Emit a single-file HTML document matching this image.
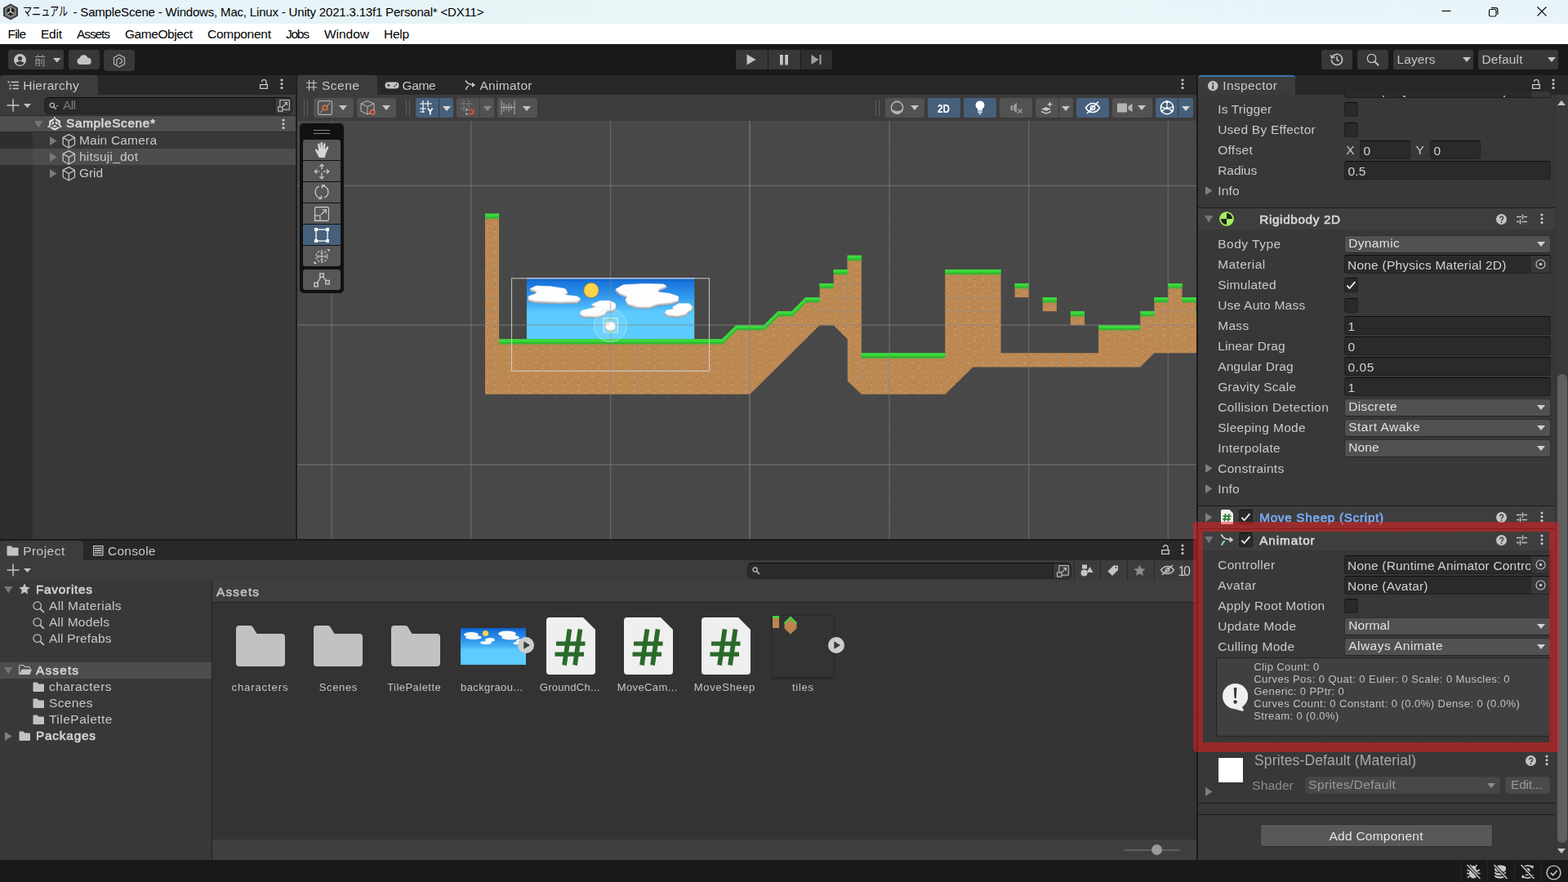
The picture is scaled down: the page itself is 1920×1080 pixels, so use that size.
<!DOCTYPE html>
<html lang="ja">
<head>
<meta charset="utf-8">
<title>Unity - SampleScene</title>
<style>
*{box-sizing:border-box;margin:0;padding:0}
html,body{width:1920px;height:1080px;overflow:hidden;background:#383838}
body{position:relative;font-family:"Liberation Sans","Noto Sans CJK JP",sans-serif;font-size:15.5px;line-height:1;color:#c8c8c8;-webkit-font-smoothing:antialiased}
#unity{position:absolute;left:0;top:54px;width:1920px;height:1026px;will-change:transform}
#unity>*{margin-top:-54px}
.a{position:absolute}
.t{position:absolute;white-space:nowrap;line-height:1;height:1em;letter-spacing:0}
.b{-webkit-text-stroke:.6px currentColor;color:#d4d4d4}
svg{position:absolute;overflow:visible}
.tab{position:absolute;background:#3c3c3c;border-radius:4px 4px 0 0}
.tb{position:absolute;background:#383838;border-radius:3px}
.sb{position:absolute;background:#525252;border-radius:3px;height:24px;top:120px}
.sbon{background:#46607c}
.fld{position:absolute;background:#2a2a2a;border:1px solid #212121;border-top-color:#0d0d0d;border-radius:3px;height:23px}
.dd{position:absolute;background:#515151;border:1px solid #303030;border-bottom-color:#242424;border-radius:3px;height:22px}
.cb{position:absolute;background:#2a2a2a;border:1px solid #212121;border-top-color:#0d0d0d;border-radius:3px;width:17px;height:18px}
.hl{position:absolute;background:#4d4d4d}
.ln{position:absolute;background:#1a1a1a;height:1px}
.hdr{position:absolute;background:#3e3e3e;border-top:1px solid #1a1a1a}
</style>
</head>
<body>
<!-- window title bar -->
<div class="a" style="left:0px;top:0px;width:1920px;height:29px;background:linear-gradient(90deg,#e5f2f9 0%,#e9f6f6 45%,#e8f4f9 100%);"></div>
<svg style="left:3px;top:4px" width="20" height="21" viewBox="0 0 20 21"><path d="M10 0.5 19 5.5v10L10 20.5 1 15.5v-10Z" fill="#3a3a3a"/><path d="M10 2.6 17 6.6v7.8L10 18.4 3 14.4V6.6Z" fill="#7d7d7d"/><path d="M10 5 14.5 7.6v5L10 15.2 5.5 12.6v-5Z" fill="#1e1e1e"/><path d="M10 10.2V5.6M10 10.2l4 2.3M10 10.2l-4 2.3" stroke="#e8e8e8" stroke-width="1.3" fill="none"/></svg>
<span class="t" style="left:28.0px;top:6px;font-size:15px;color:#000;transform:scaleX(.74);transform-origin:0 50%;">マニュアル</span>
<span class="t" style="left:89.5px;top:7px;font-size:15px;letter-spacing:-0.18px;color:#000;">- SampleScene - Windows, Mac, Linux - Unity 2021.3.13f1 Personal* &lt;DX11&gt;</span>
<svg style="left:1760px;top:4px" width="140" height="22" viewBox="0 0 140 22"><path d="M5.5 9.5h11" stroke="#111" stroke-width="1.2"/><rect x="63.5" y="7.5" width="8.5" height="8.5" rx="1.8" fill="none" stroke="#111" stroke-width="1.2"/><path d="M65.8 5.6h5.7a2.4 2.4 0 0 1 2.4 2.4v5.7" fill="none" stroke="#111" stroke-width="1.2"/><path d="M122.5 4.5l11 11M133.5 4.5l-11 11" stroke="#111" stroke-width="1.2"/></svg>
<!-- menu bar -->
<div class="a" style="left:0px;top:29px;width:1920px;height:25px;background:#fff;"></div>
<span class="t" style="left:9.5px;top:34px;letter-spacing:-0.82px;color:#000;">File</span>
<span class="t" style="left:50.0px;top:34px;letter-spacing:-0.24px;color:#000;">Edit</span>
<span class="t" style="left:94.0px;top:34px;letter-spacing:-1.10px;color:#000;">Assets</span>
<span class="t" style="left:153.0px;top:34px;letter-spacing:-0.44px;color:#000;">GameObject</span>
<span class="t" style="left:254.0px;top:34px;letter-spacing:-0.27px;color:#000;">Component</span>
<span class="t" style="left:350.0px;top:34px;letter-spacing:-1.25px;color:#000;">Jobs</span>
<span class="t" style="left:397.0px;top:34px;letter-spacing:-0.03px;color:#000;">Window</span>
<span class="t" style="left:470.0px;top:34px;letter-spacing:-0.29px;color:#000;">Help</span>
<div id="unity">
<!-- main toolbar -->
<div class="a" style="left:0px;top:54px;width:1920px;height:38px;background:#191919;"></div>
<div class="tb" style="left:10px;top:61px;width:68px;height:24px;"></div>
<svg style="left:17px;top:66px" width="15" height="15" viewBox="0 0 15 15"><circle cx="7.5" cy="7.5" r="7.5" fill="#c4c4c4"/><circle cx="7.5" cy="5.6" r="2.6" fill="#383838"/><path d="M2.6 11.6c1.2-2 2.9-2.6 4.9-2.6s3.7.6 4.9 2.6c-1.3 1.5-3 2.2-4.9 2.2s-3.6-.7-4.9-2.2Z" fill="#383838"/></svg>
<span class="t" style="left:42.0px;top:67px;font-size:14px;color:#9a9a9a;">前</span>
<svg style="left:64.75px;top:70.75px" width="9.5" height="5.5" viewBox="0 0 9.5 5.5"><path d="M0 0H9.5L4.75 5.5Z" fill="#c4c4c4"/></svg>
<div class="tb" style="left:84px;top:61px;width:38px;height:24px;"></div>
<svg style="left:94px;top:67px" width="18" height="12.5" viewBox="0 0 18 12.5"><path d="M4.2 12a4 4 0 0 1-.5-7.9A5 5 0 0 1 13.300 3.800 A4.1 4.1 0 0 1 13.800 12Z" fill="#c4c4c4"/></svg>
<div class="tb" style="left:127px;top:61px;width:38px;height:25.5px;border-radius:4px;"></div>
<svg style="left:138px;top:66px" width="16" height="18" viewBox="0 0 16 18"><path d="M8 1 14.5 4.7v7.6L8 16 1.500 12.300V4.7Z" fill="none" stroke="#b0b0b0" stroke-width="1.3"/><path d="M5 13.500V6.8L8 5l3 1.800v3.500L8 12" fill="none" stroke="#b0b0b0" stroke-width="1.3"/></svg>
<div class="a" style="left:901px;top:61px;width:118px;height:24px;background:#383838;border-radius:3px"></div>
<div class="a" style="left:980px;top:61px;width:39px;height:24px;background:#2e2e2e;border-radius:0 3px 3px 0"></div>
<div class="a" style="left:940px;top:61px;width:1px;height:24px;background:#191919;"></div>
<div class="a" style="left:980px;top:61px;width:1px;height:24px;background:#191919;"></div>
<svg style="left:914px;top:66px" width="12" height="14" viewBox="0 0 12 14"><path d="M.5.500 11.500 7 .5 13.500Z" fill="#c4c4c4"/></svg>
<svg style="left:954px;top:66px" width="12" height="14" viewBox="0 0 12 14"><rect x="1" y="1" width="3.800" height="12.500" fill="#c4c4c4"/><rect x="7.200" y="1" width="3.800" height="12.500" fill="#c4c4c4"/></svg>
<svg style="left:993px;top:66px" width="14" height="14" viewBox="0 0 14 14"><path d="M.5 1 9.500 7 .5 13Z" fill="#a0a0a0"/><rect x="10.500" y="1" width="2" height="12" fill="#a0a0a0"/></svg>
<div class="tb" style="left:1618px;top:61px;width:38px;height:24px;"></div>
<svg style="left:1629px;top:65px" width="16" height="16" viewBox="0 0 16 16"><path d="M2.200 4.800A6.600 6.600 0 1 1 1.400 8" fill="none" stroke="#c4c4c4" stroke-width="1.500"/><path d="M.4 2.200l1.300 3.900 3.800-1.400" fill="none" stroke="#c4c4c4" stroke-width="1.500"/><path d="M8 4.300V8.400l2.600 1.500" fill="none" stroke="#c4c4c4" stroke-width="1.500"/></svg>
<div class="tb" style="left:1662px;top:61px;width:38px;height:24px;"></div>
<svg style="left:1673px;top:65px" width="16" height="16" viewBox="0 0 16 16"><circle cx="6.500" cy="6.500" r="5.200" fill="none" stroke="#c4c4c4" stroke-width="1.300"/><path d="M10.500 10.500 14.500 14.500" stroke="#c4c4c4" stroke-width="2" stroke-linecap="round"/></svg>
<div class="tb" style="left:1706px;top:61px;width:98px;height:24px;"></div>
<span class="t" style="left:1710.5px;top:65px;letter-spacing:0.10px;color:#c4c4c4;">Layers</span>
<svg style="left:1790.5px;top:70.0px" width="10" height="6" viewBox="0 0 10 6"><path d="M0 0H10L5.0 6Z" fill="#c4c4c4"/></svg>
<div class="tb" style="left:1810px;top:61px;width:98px;height:24px;"></div>
<span class="t" style="left:1814.5px;top:65px;letter-spacing:0.15px;color:#c4c4c4;">Default</span>
<svg style="left:1894.5px;top:70.0px" width="10" height="6" viewBox="0 0 10 6"><path d="M0 0H10L5.0 6Z" fill="#c4c4c4"/></svg>
<!-- hierarchy panel -->
<div class="a" style="left:0px;top:92px;width:362px;height:569px;background:#383838;"></div>
<div class="a" style="left:0px;top:92px;width:362px;height:24px;background:#282828;"></div>
<div class="tab" style="left:0px;top:92px;width:120px;height:24px;"></div>
<svg style="left:9px;top:98px" width="15" height="13" viewBox="0 0 15 13"><path d="M4.500 2.500h9.500M6.500 6.500h7.500M6.500 10.500h7.500" stroke="#c4c4c4" stroke-width="1.300"/><rect x="0.500" y="1.500" width="2" height="2" fill="#c4c4c4"/><rect x="2.500" y="5.500" width="2" height="2" fill="#c4c4c4"/><rect x="2.500" y="9.500" width="2" height="2" fill="#c4c4c4"/></svg>
<span class="t" style="left:28.2px;top:97px;letter-spacing:0.27px;">Hierarchy</span>
<svg style="left:318px;top:97px" width="10" height="12" viewBox="0 0 10 12"><path d="M2.600 3.400a2.700 2.700 0 0 1 5.400-.3V6.500" fill="none" stroke="#c8c8c8" stroke-width="1.300"/><rect x="0.650" y="6.650" width="8.700" height="4.700" fill="none" stroke="#c8c8c8" stroke-width="1.300"/></svg>
<svg style="left:343px;top:96.2px" width="4" height="13.6" viewBox="0 0 4 13.6"><circle cx="2" cy="2" r="1.55" fill="#c8c8c8"/><circle cx="2" cy="6.8" r="1.55" fill="#c8c8c8"/><circle cx="2" cy="11.6" r="1.55" fill="#c8c8c8"/></svg>
<div class="a" style="left:0px;top:116px;width:362px;height:26px;background:#3c3c3c;"></div>
<svg style="left:8px;top:121px" width="16" height="16" viewBox="0 0 16 16"><path d="M8 0.500v15M0.500 8h15" stroke="#c4c4c4" stroke-width="1.500"/></svg>
<svg style="left:29.0px;top:126.5px" width="9" height="5" viewBox="0 0 9 5"><path d="M0 0H9L4.5 5Z" fill="#c4c4c4"/></svg>
<div class="fld" style="left:54px;top:119px;width:304px;height:21px;border-radius:6px;"></div>
<div class="a" style="left:336px;top:120px;width:1px;height:19px;background:#1f1f1f;"></div>
<svg style="left:60px;top:125px" width="12" height="10" viewBox="0 0 12 10"><circle cx="3.800" cy="3.800" r="2.700" fill="none" stroke="#b4b4b4" stroke-width="1.400"/><path d="M5.800 5.800 8.800 8.800" stroke="#b4b4b4" stroke-width="1.600"/><path d="M8.500 4h3l-1.500 1.800Z" fill="#b4b4b4"/></svg>
<span class="t" style="left:77.0px;top:121px;letter-spacing:-0.61px;color:#7a7a7a;">All</span>
<div class="a" style="left:337px;top:120px;width:20px;height:19px;background:#3a3a3a;border-radius:0 6px 6px 0"></div>
<svg style="left:339.5px;top:121.5px" width="15" height="15" viewBox="0 0 15 15"><rect x="2.800" y="0.700" width="11.500" height="11.500" fill="none" stroke="#c0c0c0" stroke-width="1.100"/><rect x="0.600" y="9" width="5.200" height="5.200" fill="#3a3a3a" stroke="#c0c0c0" stroke-width="1.100"/><path d="M6 9 11 3.800M7.800 3.500h3.500v3.500" fill="none" stroke="#c0c0c0" stroke-width="1.200"/></svg>
<div class="a" style="left:0px;top:141px;width:362px;height:1px;background:#262626;"></div>
<div class="a" style="left:0px;top:162px;width:40px;height:498px;background:#2e2e2e;"></div>
<div class="a" style="left:0px;top:142px;width:362px;height:20px;background:#4f4f4f;"></div>
<div class="a" style="left:0px;top:161px;width:362px;height:1px;background:#2c2c2c;"></div>
<svg style="left:42.25px;top:147.75px" width="10.5" height="8.5" viewBox="0 0 10.5 8.5"><path d="M0 0H10.5L5.25 8.5Z" fill="#757575"/></svg>
<svg style="left:58px;top:143px" width="18" height="18" viewBox="0 0 18 18"><path d="M9 1.200 15.800 5v8L9 16.800 2.200 13V5Z" fill="#e0e0e0"/><path d="M9 9V2M9 9l6 3.500M9 9 3 12.500" stroke="#4a4a4a" stroke-width="1.600"/><path d="M9 4.500 13 6.800v4.500L9 13.500 5 11.300V6.800Z" fill="none" stroke="#4a4a4a" stroke-width="1.200"/><path d="M0.500 12.500 3 11M17.500 12.500 15 11M9 0v2.500" stroke="#e0e0e0" stroke-width="1.500"/></svg>
<span class="t b" style="left:81.0px;top:143px;font-size:15.3px;letter-spacing:0.71px;color:#d8d8d8;">SampleScene*</span>
<svg style="left:345px;top:145.2px" width="4" height="13.6" viewBox="0 0 4 13.6"><circle cx="2" cy="2" r="1.55" fill="#c8c8c8"/><circle cx="2" cy="6.8" r="1.55" fill="#c8c8c8"/><circle cx="2" cy="11.6" r="1.55" fill="#c8c8c8"/></svg>
<div class="a" style="left:0px;top:182px;width:362px;height:20px;background:#4d4d4d;"></div>
<div class="a" style="left:0px;top:182px;width:40px;height:20px;background:#464646;"></div>
<svg style="left:61.25px;top:166.5px" width="8.5" height="11" viewBox="0 0 8.5 11"><path d="M0 0V11L8.5 5.5Z" fill="#7a7a7a"/></svg>
<svg style="left:75.8px;top:163.5px" width="16.6" height="17.6" viewBox="0.800 0.500 14.400 16"><path d="M8 1 14.500 4.500v7.800L8 16 1.500 12.300V4.500Z" fill="none" stroke="#c4c4c4" stroke-width="1.200" stroke-linejoin="round"/><path d="M1.500 4.500 8 8.200l6.500-3.700M8 8.200V16" fill="none" stroke="#c4c4c4" stroke-width="1.200"/></svg>
<span class="t" style="left:97.0px;top:164px;letter-spacing:0.20px;">Main Camera</span>
<svg style="left:61.25px;top:186.5px" width="8.5" height="11" viewBox="0 0 8.5 11"><path d="M0 0V11L8.5 5.5Z" fill="#7a7a7a"/></svg>
<svg style="left:75.8px;top:183.5px" width="16.6" height="17.6" viewBox="0.800 0.500 14.400 16"><path d="M8 1 14.500 4.500v7.800L8 16 1.500 12.300V4.500Z" fill="none" stroke="#c4c4c4" stroke-width="1.200" stroke-linejoin="round"/><path d="M1.500 4.500 8 8.200l6.500-3.700M8 8.200V16" fill="none" stroke="#c4c4c4" stroke-width="1.200"/></svg>
<span class="t" style="left:97.0px;top:184px;letter-spacing:0.22px;">hitsuji_dot</span>
<svg style="left:61.25px;top:206.5px" width="8.5" height="11" viewBox="0 0 8.5 11"><path d="M0 0V11L8.5 5.5Z" fill="#7a7a7a"/></svg>
<svg style="left:75.8px;top:203.5px" width="16.6" height="17.6" viewBox="0.800 0.500 14.400 16"><path d="M8 1 14.500 4.500v7.800L8 16 1.500 12.300V4.500Z" fill="none" stroke="#c4c4c4" stroke-width="1.200" stroke-linejoin="round"/><path d="M1.500 4.500 8 8.200l6.500-3.700M8 8.200V16" fill="none" stroke="#c4c4c4" stroke-width="1.200"/></svg>
<span class="t" style="left:97.0px;top:204px;letter-spacing:-0.09px;">Grid</span>
<div class="a" style="left:362px;top:92px;width:2px;height:568px;background:#1e1e1e;"></div>
<div class="a" style="left:0px;top:660px;width:1467px;height:2px;background:#1a1a1a;"></div>
<!-- scene panel -->
<div class="a" style="left:364px;top:92px;width:1101px;height:24px;background:#282828;"></div>
<div class="tab" style="left:364px;top:92px;width:98px;height:24px;"></div>
<svg style="left:375px;top:98px" width="13" height="13" viewBox="0 0 13 13"><path d="M3.500 0v13M9 0v13M0 3.500h13M0 9h13" stroke="#c4c4c4" stroke-width="1.200"/></svg>
<span class="t" style="left:394.0px;top:97px;letter-spacing:0.51px;">Scene</span>
<svg style="left:471px;top:99px" width="18" height="11" viewBox="0 0 18 11"><path d="M4.500 1.500h9a4 4 0 0 1 0 8h-9a4 4 0 0 1 0-8Z" fill="#c4c4c4"/><path d="M3 5.500h3.600M4.800 3.700v3.600" stroke="#282828" stroke-width="1.100"/><circle cx="12" cy="6.600" r="0.900" fill="#282828"/><circle cx="14.200" cy="4.500" r="0.900" fill="#282828"/></svg>
<span class="t" style="left:492.5px;top:97px;letter-spacing:-0.40px;">Game</span>
<svg style="left:569px;top:97px" width="14" height="14" viewBox="0 0 14 14"><path d="M1.200 1.500C2.500 5 5 6.800 11.500 6.900" fill="none" stroke="#c8c8c8" stroke-width="1.600"/><path d="M9 3.800 13 6.900 9 10Z" fill="#c8c8c8"/><path d="M4.600 8C3.200 9.200 2 10.800 1.500 12.800" fill="none" stroke="#c8c8c8" stroke-width="1.600"/></svg>
<span class="t" style="left:587.5px;top:97px;letter-spacing:0.28px;">Animator</span>
<svg style="left:1446px;top:96.2px" width="4" height="13.6" viewBox="0 0 4 13.6"><circle cx="2" cy="2" r="1.55" fill="#c8c8c8"/><circle cx="2" cy="6.8" r="1.55" fill="#c8c8c8"/><circle cx="2" cy="11.6" r="1.55" fill="#c8c8c8"/></svg>
<div class="a" style="left:364px;top:116px;width:1101px;height:32px;background:#3c3c3c;"></div>
<div class="a" style="left:372px;top:122px;width:1px;height:20px;background:#5e5e5e;"></div><div class="a" style="left:376px;top:122px;width:1px;height:20px;background:#5e5e5e;"></div>
<div class="a" style="left:497px;top:122px;width:1px;height:20px;background:#5e5e5e;"></div><div class="a" style="left:501px;top:122px;width:1px;height:20px;background:#5e5e5e;"></div>
<div class="a" style="left:1071.5px;top:122px;width:1px;height:20px;background:#5e5e5e;"></div><div class="a" style="left:1075.5px;top:122px;width:1px;height:20px;background:#5e5e5e;"></div>
<div class="sb" style="left:384px;top:120px;width:49px;height:24px;"></div>
<svg style="left:389px;top:123px" width="18" height="18" viewBox="0 0 18 18"><rect x="0.600" y="0.600" width="16.800" height="16.800" rx="2" fill="none" stroke="#b0b0b0" stroke-width="1.100"/><path d="M3 15 15 3" stroke="#b0b0b0" stroke-width="1"/><circle cx="9" cy="9" r="2.800" fill="#525252" stroke="#f2683c" stroke-width="1.500"/></svg>
<svg style="left:415.0px;top:129.0px" width="10" height="6" viewBox="0 0 10 6"><path d="M0 0H10L5.0 6Z" fill="#c4c4c4"/></svg>
<div class="sb" style="left:437px;top:120px;width:48px;height:24px;"></div>
<svg style="left:441px;top:122px" width="20" height="20" viewBox="0 0 20 20"><path d="M9 1.500 17 5v9l-8 4-8-4V5Z" fill="none" stroke="#b0b0b0" stroke-width="1.100" stroke-linejoin="round"/><path d="M1 5l8 3.500L17 5M9 8.500V18" fill="none" stroke="#b0b0b0" stroke-width="1.100"/><circle cx="15.200" cy="15.300" r="2.800" fill="#525252" stroke="#f2683c" stroke-width="1.500"/></svg>
<svg style="left:468.0px;top:129.0px" width="10" height="6" viewBox="0 0 10 6"><path d="M0 0H10L5.0 6Z" fill="#c4c4c4"/></svg>
<div class="sb sbon" style="left:509px;top:120px;width:46px;height:24px;"></div><div class="a" style="left:537px;top:120px;width:1px;height:24px;background:#3c3c3c;"></div>
<svg style="left:514px;top:123px" width="18" height="18" viewBox="0 0 18 18"><path d="M4 0v15M10 0v8M0 4h15M0 10h8M0 14h6" stroke="#fff" stroke-width="1.200"/><path d="M10 9.500 12.800 13.500 15.600 9.500M12.800 13.500V17.500" fill="none" stroke="#fff" stroke-width="1.700"/></svg>
<svg style="left:541.5px;top:129.5px" width="10" height="6" viewBox="0 0 10 6"><path d="M0 0H10L5.0 6Z" fill="#d8d8d8"/></svg>
<div class="sb" style="left:559px;top:120px;width:46px;height:24px;"></div><div class="a" style="left:587px;top:120px;width:1px;height:24px;background:#3c3c3c;"></div>
<svg style="left:564px;top:123px" width="19" height="18" viewBox="0 0 19 18"><path d="M4 0v14M10 0v9M0 4h15M0 10h9" stroke="#8c8c8c" stroke-width="1.100" stroke-dasharray="2 1"/><path d="M9.500 11.500h3.500a2.600 2.600 0 0 1 0 5.200h-3.500" fill="none" stroke="#d2562f" stroke-width="1.900"/><rect x="6.500" y="10.500" width="2" height="2" fill="#c4c4c4"/><rect x="6.500" y="15.500" width="2" height="2" fill="#c4c4c4"/></svg>
<svg style="left:591.5px;top:129.5px" width="10" height="6" viewBox="0 0 10 6"><path d="M0 0H10L5.0 6Z" fill="#8a8a8a"/></svg>
<div class="sb" style="left:609px;top:120px;width:49px;height:24px;"></div>
<svg style="left:613px;top:123px" width="18" height="17" viewBox="0 0 18 17"><path d="M1 0v17M17 0v17" stroke="#b0b0b0" stroke-width="1"/><path d="M4 3v11M7 5v7M10 3v11M13 5v7M1 8.500h16" stroke="#b0b0b0" stroke-width="1"/></svg>
<svg style="left:640.0px;top:129.5px" width="10" height="6" viewBox="0 0 10 6"><path d="M0 0H10L5.0 6Z" fill="#c4c4c4"/></svg>
<div class="sb" style="left:1084px;top:120px;width:48px;height:24px;"></div>
<svg style="left:1090px;top:123px" width="17" height="17" viewBox="0 0 17 17"><circle cx="8.500" cy="8.800" r="7.200" fill="none" stroke="#b8b8b8" stroke-width="1.400"/><path d="M1.730 11.260A7.200 7.200 0 0 0 15.270 11.260A12 12 0 0 1 1.730 11.260Z" fill="#b8b8b8" stroke="#b8b8b8" stroke-width="1"/><path d="M5.500 1.200h6" stroke="#b8b8b8" stroke-width="1.300"/></svg>
<svg style="left:1114.5px;top:129.0px" width="10" height="6" viewBox="0 0 10 6"><path d="M0 0H10L5.0 6Z" fill="#c4c4c4"/></svg>
<div class="sb sbon" style="left:1136px;top:120px;width:40px;height:24px;"></div>
<span class="t" style="left:1147.5px;top:126px;font-size:13px;font-weight:bold;color:#fff;transform:scale(.9,1.16);transform-origin:0 50%">2D</span>
<div class="sb sbon" style="left:1180px;top:120px;width:40px;height:24px;"></div>
<svg style="left:1194px;top:123px" width="12" height="18" viewBox="0 0 12 18"><path d="M6 0.500a5.300 5.300 0 0 1 3 9.700V12.500H3V10.200A5.300 5.300 0 0 1 6 0.500Z" fill="#fff"/><rect x="3.300" y="13.500" width="5.400" height="1.600" fill="#fff"/><path d="M4 16h4l-2 1.500Z" fill="#fff"/></svg>
<div class="sb" style="left:1224px;top:120px;width:40px;height:24px;"></div>
<svg style="left:1237px;top:124px" width="18" height="16" viewBox="0 0 18 16"><path d="M0.500 5h2.500V11h-2.500Z M4 5 8 1.500v13L4 11Z" fill="#9a9a9a"/><path d="M9.500 9.500 14.500 14.500M14.500 9.500 9.500 14.500" stroke="#9a9a9a" stroke-width="1.600"/></svg>
<div class="sb" style="left:1268px;top:120px;width:46px;height:24px;"></div><div class="a" style="left:1296px;top:120px;width:1px;height:24px;background:#3c3c3c;"></div>
<svg style="left:1274px;top:124px" width="17" height="16" viewBox="0 0 17 16"><path d="M1 9.500 7 7l6 2.500L7 12Z" fill="#c4c4c4"/><path d="M1 12.500 7 15l6-2.500" fill="none" stroke="#c4c4c4" stroke-width="1.400"/><path d="M11.500 0l1 2.800 2.800 1-2.800 1-1 2.800-1-2.800-2.800-1 2.800-1Z" fill="#c4c4c4"/></svg>
<svg style="left:1300.0px;top:129.5px" width="10" height="6" viewBox="0 0 10 6"><path d="M0 0H10L5.0 6Z" fill="#c4c4c4"/></svg>
<div class="sb sbon" style="left:1318px;top:120px;width:40px;height:24px;"></div>
<svg style="left:1328px;top:123px" width="20" height="18" viewBox="0 0 20 18"><path d="M1.500 9C4 5 7 3.500 10 3.500S16 5 18.500 9C16 13 13 14.500 10 14.500S4 13 1.500 9Z" fill="none" stroke="#fff" stroke-width="1.500"/><circle cx="10" cy="9" r="2.600" fill="none" stroke="#fff" stroke-width="1.500"/><path d="M3 16 17 1.500" stroke="#fff" stroke-width="1.600"/></svg>
<div class="sb" style="left:1362px;top:120px;width:49px;height:24px;"></div>
<svg style="left:1368px;top:126px" width="20" height="12" viewBox="0 0 20 12"><rect x="0" y="0.500" width="12" height="11" rx="1" fill="#b4b4b4"/><path d="M13.500 4 18.500 1v10L13.500 8Z" fill="#b4b4b4"/></svg>
<svg style="left:1393.0px;top:129.0px" width="10" height="6" viewBox="0 0 10 6"><path d="M0 0H10L5.0 6Z" fill="#c4c4c4"/></svg>
<div class="sb sbon" style="left:1415px;top:120px;width:46px;height:24px;"></div><div class="a" style="left:1442px;top:120px;width:1px;height:24px;background:#3c3c3c;"></div>
<svg style="left:1420px;top:123px" width="18" height="18" viewBox="0 0 18 18"><circle cx="9" cy="9" r="7.800" fill="none" stroke="#fff" stroke-width="1.400"/><path d="M9 1.200V9L2.500 13M9 9l6.500 4" fill="none" stroke="#fff" stroke-width="1.200"/><path d="M1.500 7.500c4 3 11 3 15 0" fill="none" stroke="#fff" stroke-width="1.200"/><circle cx="9" cy="1.800" r="1.700" fill="#fff"/><circle cx="9" cy="9.300" r="1.600" fill="#fff"/><circle cx="2.800" cy="12.800" r="1.600" fill="#fff"/><circle cx="15.200" cy="12.800" r="1.600" fill="#fff"/></svg>
<svg style="left:1447.0px;top:129.5px" width="10" height="6" viewBox="0 0 10 6"><path d="M0 0H10L5.0 6Z" fill="#d8d8d8"/></svg>
<svg style="left:364px;top:148px;overflow:hidden" width="1101" height="512" viewBox="364 148 1101 512"><defs><pattern id="mg" x="747.6" y="398.2" width="17.07" height="17.07" patternUnits="userSpaceOnUse"><path d="M0.500 0V17.07M0 0.500H17.07" stroke="#4b4b4b" stroke-width="1" fill="none"/></pattern><pattern id="dirt" x="747.6" y="398.2" width="17.07" height="17.07" patternUnits="userSpaceOnUse"><rect width="17.17" height="17.17" fill="#bd8953"/><rect x="11" y="2.600" width="2.200" height="0.900" fill="#8a5a2c"/><rect x="11" y="3.600" width="2.200" height="0.900" fill="#e6b884"/><rect x="2" y="12.700" width="2.200" height="0.900" fill="#8a5a2c"/><rect x="2" y="13.700" width="2.200" height="0.900" fill="#e6b884"/><rect x="7" y="9.600" width="1" height="1" fill="#8a5a2c"/><rect x="7" y="10.600" width="1" height="1" fill="#e0b07c"/><path d="M2.300 1.300 4.300 3.300" stroke="#dcae7e" stroke-width="0.900"/><rect x="4" y="2" width="1" height="1" fill="#94622f"/><path d="M11.300 11.600 13.300 13.300" stroke="#dcae7e" stroke-width="0.900"/></pattern><linearGradient id="sky" x1="0" y1="0" x2="0" y2="1"><stop offset="0" stop-color="#0d5cc4"/><stop offset="0.060" stop-color="#1874dc"/><stop offset="0.250" stop-color="#2b90ea"/><stop offset="0.450" stop-color="#47b2f6"/><stop offset="0.560" stop-color="#5ccbfd"/><stop offset="1" stop-color="#5ccbfd"/></linearGradient></defs><rect x="364" y="148" width="1101" height="512" fill="#484848"/><rect x="364" y="148" width="1101" height="512" fill="url(#mg)"/><rect x="645" y="340.600" width="205.200" height="74.700" fill="url(#sky)"/><rect x="645" y="340.200" width="205.200" height="1.200" fill="#8fb4e8"/><polygon points="649.5,355.7 656.6,352.3 674.2,352.9 691.8,355.7 694.5,359.7 690.4,363.1 706.7,365.1 710.5,367.8 706.7,371.0 685.0,371.5 655.2,370.5 647.8,368.5 647.1,365.1 657.9,361.1 655.9,357.7" fill="#8f98a8" stroke="#8f98a8" stroke-width="1.600" stroke-linejoin="round"/><polygon points="649.5,354.9 656.6,351.5 674.2,352.1 691.8,354.9 694.5,358.9 690.4,362.3 706.7,364.3 710.5,367.0 706.7,370.2 685.0,370.7 655.2,369.7 647.8,367.7 647.1,364.3 657.9,360.3 655.9,356.9" fill="#c4c4c4" stroke="#c4c4c4" stroke-width="1.400" stroke-linejoin="round"/><polygon points="649.5,353.5 656.6,350.1 674.2,350.7 691.8,353.5 694.5,357.5 690.4,360.9 706.7,362.9 710.5,365.6 706.7,368.8 685.0,369.3 655.2,368.3 647.8,366.3 647.1,362.9 657.9,358.9 655.9,355.5" fill="#fdfdfd" stroke="#fdfdfd" stroke-width="0.600" stroke-linejoin="round"/><polygon points="754.1,356.3 763.5,350.9 789.3,349.6 812.3,350.2 815.7,352.3 806.9,355.7 804.8,359.7 820.4,361.7 830.6,365.1 829.9,369.9 820.4,372.6 805.5,373.9 794.7,377.7 779.8,377.3 769.0,373.9 766.2,368.5 769.0,365.1 759.5,361.1" fill="#8f98a8" stroke="#8f98a8" stroke-width="1.600" stroke-linejoin="round"/><polygon points="754.1,355.5 763.5,350.1 789.3,348.8 812.3,349.4 815.7,351.5 806.9,354.9 804.8,358.9 820.4,360.9 830.6,364.3 829.9,369.1 820.4,371.8 805.5,373.1 794.7,376.9 779.8,376.5 769.0,373.1 766.2,367.7 769.0,364.3 759.5,360.3" fill="#c4c4c4" stroke="#c4c4c4" stroke-width="1.400" stroke-linejoin="round"/><polygon points="754.1,354.1 763.5,348.7 789.3,347.4 812.3,348.0 815.7,350.1 806.9,353.5 804.8,357.5 820.4,359.5 830.6,362.9 829.9,367.7 820.4,370.4 805.5,371.7 794.7,375.5 779.8,375.1 769.0,371.7 766.2,366.3 769.0,362.9 759.5,358.9" fill="#fdfdfd" stroke="#fdfdfd" stroke-width="0.600" stroke-linejoin="round"/><polygon points="724.9,374.6 735.1,370.5 747.3,370.5 753.4,373.9 753.4,378.7 750.0,381.4 742.5,382.1 740.5,386.1 731.0,389.1 714.8,388.8 710.5,386.1 712.1,382.7 722.9,380.0 731.0,378.0" fill="#8f98a8" stroke="#8f98a8" stroke-width="1.600" stroke-linejoin="round"/><polygon points="724.9,373.8 735.1,369.7 747.3,369.7 753.4,373.1 753.4,377.9 750.0,380.6 742.5,381.3 740.5,385.3 731.0,388.3 714.8,388.0 710.5,385.3 712.1,381.9 722.9,379.2 731.0,377.2" fill="#c4c4c4" stroke="#c4c4c4" stroke-width="1.400" stroke-linejoin="round"/><polygon points="724.9,372.4 735.1,368.3 747.3,368.3 753.4,371.7 753.4,376.5 750.0,379.2 742.5,379.9 740.5,383.9 731.0,386.9 714.8,386.6 710.5,383.9 712.1,380.5 722.9,377.8 731.0,375.8" fill="#fdfdfd" stroke="#fdfdfd" stroke-width="0.600" stroke-linejoin="round"/><polygon points="823.8,378.0 831.2,373.9 843.4,373.9 847.5,377.3 846.1,381.4 842.1,382.7 840.0,386.1 829.9,388.6 817.7,387.5 814.3,384.8 816.3,382.1 825.8,380.7" fill="#8f98a8" stroke="#8f98a8" stroke-width="1.600" stroke-linejoin="round"/><polygon points="823.8,377.2 831.2,373.1 843.4,373.1 847.5,376.5 846.1,380.6 842.1,381.9 840.0,385.3 829.9,387.8 817.7,386.7 814.3,384.0 816.3,381.3 825.8,379.9" fill="#c4c4c4" stroke="#c4c4c4" stroke-width="1.400" stroke-linejoin="round"/><polygon points="823.8,375.8 831.2,371.7 843.4,371.7 847.5,375.1 846.1,379.2 842.1,380.5 840.0,383.9 829.9,386.4 817.7,385.3 814.3,382.6 816.3,379.9 825.8,378.5" fill="#fdfdfd" stroke="#fdfdfd" stroke-width="0.600" stroke-linejoin="round"/><circle cx="724" cy="355.500" r="9.200" fill="#fdd349" stroke="#9c7a3a" stroke-width="0.800"/><polygon points="593.97,261.64 611.04,261.64 611.04,415.27 884.16,415.27 901.23,398.20 935.37,398.20 952.44,381.13 969.51,381.13 986.58,364.06 1003.65,364.06 1003.65,346.99 1020.72,346.99 1020.72,329.92 1037.79,329.92 1037.79,312.85 1054.86,312.85 1054.86,432.34 1157.28,432.34 1157.28,329.92 1225.56,329.92 1225.56,432.34 1345.05,432.34 1345.05,398.20 1396.26,398.20 1396.26,381.13 1413.33,381.13 1413.33,364.06 1430.40,364.06 1430.40,346.99 1447.47,346.99 1447.47,364.06 1464.54,364.06 1464.54,381.13 1481.61,381.13 1481.61,432.34 1413.33,432.34 1396.26,449.41 1191.42,449.41 1157.28,482.70 1054.86,482.70 1037.79,466.48 1037.79,415.27 1020.72,398.20 1003.65,398.20 918.30,482.70 593.97,482.70" fill="url(#dirt)"/><rect x="1242.63" y="346.99" width="17.07" height="17.07" fill="url(#dirt)"/><rect x="1276.77" y="364.06" width="17.07" height="17.07" fill="url(#dirt)"/><rect x="1310.91" y="381.13" width="17.07" height="17.07" fill="url(#dirt)"/><path d="M781.7 415.3V482.7M798.8 415.3V482.7M815.9 415.3V482.7M833.0 415.3V482.7M594.0 329.9h17.07M594.0 347.0h17.07M594.0 364.1h17.07M594.0 381.1h17.07M1037.8 312.9V398.2M1020.7 347.0h34.14M1020.7 364.1h34.14M1003.7 381.1h51.21M1054.9 439.2V466.5M1071.9 439.2V482.7M1089.0 439.2V482.7M1259.7 432.3V449.4M1276.8 432.3V449.4M1293.8 432.3V449.4M1310.9 432.3V449.4M1328.0 432.3V449.4M1157.3 364.1h68.28M1157.3 381.1h68.28M1396.3 381.1h68.28" stroke="#909090" stroke-opacity="0.550" stroke-width="1" fill="none"/><path d="M593.97 261.64H611.04V266.76L608.91 268.96L606.77 266.76L604.64 268.96L602.51 266.76L600.37 268.96L598.24 266.76L596.10 268.96L593.97 266.76Z" fill="#2cba2f"/><rect x="593.97" y="261.64" width="17.07" height="3.58" fill="#3bd93c"/><path d="M611.04 415.27H884.16V420.39L882.03 422.59L879.89 420.39L877.76 422.59L875.62 420.39L873.49 422.59L871.36 420.39L869.22 422.59L867.09 420.39L864.96 422.59L862.82 420.39L860.69 422.59L858.56 420.39L856.42 422.59L854.29 420.39L852.15 422.59L850.02 420.39L847.89 422.59L845.75 420.39L843.62 422.59L841.49 420.39L839.35 422.59L837.22 420.39L835.08 422.59L832.95 420.39L830.82 422.59L828.68 420.39L826.55 422.59L824.42 420.39L822.28 422.59L820.15 420.39L818.01 422.59L815.88 420.39L813.75 422.59L811.61 420.39L809.48 422.59L807.35 420.39L805.21 422.59L803.08 420.39L800.94 422.59L798.81 420.39L796.68 422.59L794.54 420.39L792.41 422.59L790.27 420.39L788.14 422.59L786.01 420.39L783.87 422.59L781.74 420.39L779.61 422.59L777.47 420.39L775.34 422.59L773.21 420.39L771.07 422.59L768.94 420.39L766.80 422.59L764.67 420.39L762.54 422.59L760.40 420.39L758.27 422.59L756.13 420.39L754.00 422.59L751.87 420.39L749.73 422.59L747.60 420.39L745.47 422.59L743.33 420.39L741.20 422.59L739.06 420.39L736.93 422.59L734.80 420.39L732.66 422.59L730.53 420.39L728.40 422.59L726.26 420.39L724.13 422.59L722.00 420.39L719.86 422.59L717.73 420.39L715.59 422.59L713.46 420.39L711.33 422.59L709.19 420.39L707.06 422.59L704.92 420.39L702.79 422.59L700.66 420.39L698.52 422.59L696.39 420.39L694.26 422.59L692.12 420.39L689.99 422.59L687.85 420.39L685.72 422.59L683.59 420.39L681.45 422.59L679.32 420.39L677.19 422.59L675.05 420.39L672.92 422.59L670.78 420.39L668.65 422.59L666.52 420.39L664.38 422.59L662.25 420.39L660.12 422.59L657.98 420.39L655.85 422.59L653.71 420.39L651.58 422.59L649.45 420.39L647.31 422.59L645.18 420.39L643.05 422.59L640.91 420.39L638.78 422.59L636.64 420.39L634.51 422.59L632.38 420.39L630.24 422.59L628.11 420.39L625.98 422.59L623.84 420.39L621.71 422.59L619.57 420.39L617.44 422.59L615.31 420.39L613.17 422.59L611.04 420.39Z" fill="#2cba2f"/><rect x="611.04" y="415.27" width="273.12" height="3.58" fill="#3bd93c"/><polygon points="884.16,415.27 901.23,398.20 901.23,405.37 884.16,422.44" fill="#2cba2f"/><polygon points="884.16,415.27 901.23,398.20 901.23,402.64 884.16,419.71" fill="#3bd93c"/><path d="M901.23 398.20H935.37V403.32L933.24 405.52L931.10 403.32L928.97 405.52L926.83 403.32L924.70 405.52L922.57 403.32L920.43 405.52L918.30 403.32L916.17 405.52L914.03 403.32L911.90 405.52L909.76 403.32L907.63 405.52L905.50 403.32L903.36 405.52L901.23 403.32Z" fill="#2cba2f"/><rect x="901.23" y="398.20" width="34.14" height="3.58" fill="#3bd93c"/><polygon points="935.37,398.20 952.44,381.13 952.44,388.30 935.37,405.37" fill="#2cba2f"/><polygon points="935.37,398.20 952.44,381.13 952.44,385.57 935.37,402.64" fill="#3bd93c"/><path d="M952.44 381.13H969.51V386.25L967.38 388.45L965.24 386.25L963.11 388.45L960.98 386.25L958.84 388.45L956.71 386.25L954.57 388.45L952.44 386.25Z" fill="#2cba2f"/><rect x="952.44" y="381.13" width="17.07" height="3.58" fill="#3bd93c"/><polygon points="969.51,381.13 986.58,364.06 986.58,371.23 969.51,388.30" fill="#2cba2f"/><polygon points="969.51,381.13 986.58,364.06 986.58,368.50 969.51,385.57" fill="#3bd93c"/><path d="M986.58 364.06H1003.65V369.18L1001.52 371.38L999.38 369.18L997.25 371.38L995.12 369.18L992.98 371.38L990.85 369.18L988.71 371.38L986.58 369.18Z" fill="#2cba2f"/><rect x="986.58" y="364.06" width="17.07" height="3.58" fill="#3bd93c"/><path d="M1003.65 346.99H1020.72V352.11L1018.59 354.31L1016.45 352.11L1014.32 354.31L1012.19 352.11L1010.05 354.31L1007.92 352.11L1005.78 354.31L1003.65 352.11Z" fill="#2cba2f"/><rect x="1003.65" y="346.99" width="17.07" height="3.58" fill="#3bd93c"/><path d="M1020.72 329.92H1037.79V335.04L1035.66 337.24L1033.52 335.04L1031.39 337.24L1029.26 335.04L1027.12 337.24L1024.99 335.04L1022.85 337.24L1020.72 335.04Z" fill="#2cba2f"/><rect x="1020.72" y="329.92" width="17.07" height="3.58" fill="#3bd93c"/><path d="M1037.79 312.85H1054.86V317.97L1052.73 320.17L1050.59 317.97L1048.46 320.17L1046.33 317.97L1044.19 320.17L1042.06 317.97L1039.92 320.17L1037.79 317.97Z" fill="#2cba2f"/><rect x="1037.79" y="312.85" width="17.07" height="3.58" fill="#3bd93c"/><path d="M1054.86 432.34H1157.28V437.46L1155.15 439.66L1153.01 437.46L1150.88 439.66L1148.75 437.46L1146.61 439.66L1144.48 437.46L1142.34 439.66L1140.21 437.46L1138.08 439.66L1135.94 437.46L1133.81 439.66L1131.68 437.46L1129.54 439.66L1127.41 437.46L1125.27 439.66L1123.14 437.46L1121.01 439.66L1118.87 437.46L1116.74 439.66L1114.61 437.46L1112.47 439.66L1110.34 437.46L1108.20 439.66L1106.07 437.46L1103.94 439.66L1101.80 437.46L1099.67 439.66L1097.54 437.46L1095.40 439.66L1093.27 437.46L1091.13 439.66L1089.00 437.46L1086.87 439.66L1084.73 437.46L1082.60 439.66L1080.47 437.46L1078.33 439.66L1076.20 437.46L1074.06 439.66L1071.93 437.46L1069.80 439.66L1067.66 437.46L1065.53 439.66L1063.40 437.46L1061.26 439.66L1059.13 437.46L1056.99 439.66L1054.86 437.46Z" fill="#2cba2f"/><rect x="1054.86" y="432.34" width="102.42" height="3.58" fill="#3bd93c"/><path d="M1157.28 329.92H1225.56V335.04L1223.43 337.24L1221.29 335.04L1219.16 337.24L1217.03 335.04L1214.89 337.24L1212.76 335.04L1210.62 337.24L1208.49 335.04L1206.36 337.24L1204.22 335.04L1202.09 337.24L1199.95 335.04L1197.82 337.24L1195.69 335.04L1193.55 337.24L1191.42 335.04L1189.29 337.24L1187.15 335.04L1185.02 337.24L1182.88 335.04L1180.75 337.24L1178.62 335.04L1176.48 337.24L1174.35 335.04L1172.22 337.24L1170.08 335.04L1167.95 337.24L1165.82 335.04L1163.68 337.24L1161.55 335.04L1159.41 337.24L1157.28 335.04Z" fill="#2cba2f"/><rect x="1157.28" y="329.92" width="68.28" height="3.58" fill="#3bd93c"/><path d="M1345.05 398.20H1396.26V403.32L1394.13 405.52L1391.99 403.32L1389.86 405.52L1387.73 403.32L1385.59 405.52L1383.46 403.32L1381.32 405.52L1379.19 403.32L1377.06 405.52L1374.92 403.32L1372.79 405.52L1370.66 403.32L1368.52 405.52L1366.39 403.32L1364.25 405.52L1362.12 403.32L1359.99 405.52L1357.85 403.32L1355.72 405.52L1353.59 403.32L1351.45 405.52L1349.32 403.32L1347.18 405.52L1345.05 403.32Z" fill="#2cba2f"/><rect x="1345.05" y="398.20" width="51.21" height="3.58" fill="#3bd93c"/><path d="M1396.26 381.13H1413.33V386.25L1411.20 388.45L1409.06 386.25L1406.93 388.45L1404.80 386.25L1402.66 388.45L1400.53 386.25L1398.39 388.45L1396.26 386.25Z" fill="#2cba2f"/><rect x="1396.26" y="381.13" width="17.07" height="3.58" fill="#3bd93c"/><path d="M1413.33 364.06H1430.40V369.18L1428.27 371.38L1426.13 369.18L1424.00 371.38L1421.87 369.18L1419.73 371.38L1417.60 369.18L1415.46 371.38L1413.33 369.18Z" fill="#2cba2f"/><rect x="1413.33" y="364.06" width="17.07" height="3.58" fill="#3bd93c"/><path d="M1430.40 346.99H1447.47V352.11L1445.34 354.31L1443.20 352.11L1441.07 354.31L1438.94 352.11L1436.80 354.31L1434.67 352.11L1432.53 354.31L1430.40 352.11Z" fill="#2cba2f"/><rect x="1430.40" y="346.99" width="17.07" height="3.58" fill="#3bd93c"/><path d="M1447.47 364.06H1464.54V369.18L1462.41 371.38L1460.27 369.18L1458.14 371.38L1456.01 369.18L1453.87 371.38L1451.74 369.18L1449.60 371.38L1447.47 369.18Z" fill="#2cba2f"/><rect x="1447.47" y="364.06" width="17.07" height="3.58" fill="#3bd93c"/><path d="M1464.54 381.13H1481.61V386.25L1479.48 388.45L1477.34 386.25L1475.21 388.45L1473.08 386.25L1470.94 388.45L1468.81 386.25L1466.67 388.45L1464.54 386.25Z" fill="#2cba2f"/><rect x="1464.54" y="381.13" width="17.07" height="3.58" fill="#3bd93c"/><path d="M1242.63 346.99H1259.70V352.11L1257.57 354.31L1255.43 352.11L1253.30 354.31L1251.17 352.11L1249.03 354.31L1246.90 352.11L1244.76 354.31L1242.63 352.11Z" fill="#2cba2f"/><rect x="1242.63" y="346.99" width="17.07" height="3.58" fill="#3bd93c"/><path d="M1276.77 364.06H1293.84V369.18L1291.71 371.38L1289.57 369.18L1287.44 371.38L1285.31 369.18L1283.17 371.38L1281.04 369.18L1278.90 371.38L1276.77 369.18Z" fill="#2cba2f"/><rect x="1276.77" y="364.06" width="17.07" height="3.58" fill="#3bd93c"/><path d="M1310.91 381.13H1327.98V386.25L1325.85 388.45L1323.71 386.25L1321.58 388.45L1319.45 386.25L1317.31 388.45L1315.18 386.25L1313.04 388.45L1310.91 386.25Z" fill="#2cba2f"/><rect x="1310.91" y="381.13" width="17.07" height="3.58" fill="#3bd93c"/><rect x="405.5" y="148" width="1.300" height="512" fill="#868686" fill-opacity="0.480"/><rect x="576.2" y="148" width="1.300" height="512" fill="#868686" fill-opacity="0.480"/><rect x="746.9" y="148" width="1.300" height="512" fill="#868686" fill-opacity="0.480"/><rect x="917" y="148" width="2" height="512" fill="#868686" fill-opacity="0.500"/><rect x="1088.3" y="148" width="1.300" height="512" fill="#868686" fill-opacity="0.480"/><rect x="1259.0" y="148" width="1.300" height="512" fill="#868686" fill-opacity="0.480"/><rect x="1429.7" y="148" width="1.300" height="512" fill="#868686" fill-opacity="0.480"/><rect x="364" y="226.65" width="1101" height="1.500" fill="#868686" fill-opacity="0.500"/><rect x="364" y="397.35" width="1101" height="1.500" fill="#868686" fill-opacity="0.500"/><rect x="364" y="568.05" width="1101" height="1.500" fill="#868686" fill-opacity="0.500"/><rect x="626.500" y="340.800" width="242" height="113.500" fill="none" stroke="#dcdcdc" stroke-opacity="0.800" stroke-width="1.100"/><circle cx="747.400" cy="398.400" r="20" fill="#ffffff" fill-opacity="0.120" stroke="#bdf0ff" stroke-opacity="0.600" stroke-width="1"/><rect x="739" y="389.500" width="17.500" height="17.500" fill="#ffffff" fill-opacity="0.150" stroke="#d8f4ff" stroke-width="0.800"/><ellipse cx="747.500" cy="399.500" rx="6.300" ry="5.500" fill="#fbfbfb" stroke="#c8c0b4" stroke-width="0.700"/><circle cx="744" cy="396.500" r="2.500" fill="#f2e2cf"/><path d="M741.500 393.500a8 8 0 0 1 12 0" fill="none" stroke="#8ad45a" stroke-width="0.900"/><path d="M742 406h11" stroke="#8ad45a" stroke-width="0.900"/></svg>
<div class="a" style="left:367px;top:151px;width:54px;height:207.5px;background:#111111;border-radius:5px"></div>
<div class="a" style="left:384px;top:159px;width:20px;height:1px;background:#808080;"></div><div class="a" style="left:384px;top:163px;width:20px;height:1px;background:#808080;"></div>
<div class="a" style="left:371px;top:171px;width:46px;height:25px;background:#575757;border-radius:3px 3px 0 0"></div>
<div class="a" style="left:371px;top:197px;width:46px;height:25px;background:#575757;border-radius:0"></div>
<div class="a" style="left:371px;top:223px;width:46px;height:25px;background:#575757;border-radius:0"></div>
<div class="a" style="left:371px;top:249px;width:46px;height:25px;background:#575757;border-radius:0"></div>
<div class="a" style="left:371px;top:275px;width:46px;height:25px;background:#46607c;border-radius:0"></div>
<div class="a" style="left:371px;top:301px;width:46px;height:25px;background:#575757;border-radius:0 0 3px 3px"></div>
<div class="a" style="left:371px;top:330px;width:46px;height:25px;background:#575757;border-radius:3px"></div>
<svg style="left:384px;top:174px" width="20" height="20" viewBox="0 0 20 20"><path d="M6.800 19 2.300 10.600Q1.500 8.900 3 8.600 4 8.500 4.800 9.800L6.300 11.800 5.100 3Q5 1.600 6.200 1.500 7.300 1.500 7.600 2.900L8.600 8.500 8.500 1.500Q8.500 .1 9.700 .1 10.900 .1 11 1.500L11.200 8.500 12.200 2.400Q12.500 1.100 13.600 1.300 14.700 1.600 14.500 2.900L13.800 9.600 16.200 5.800Q16.900 4.800 17.800 5.300 18.600 5.900 18.100 7L15.300 13.500 13.600 19Z" fill="#d6d6d6"/></svg>
<svg style="left:384px;top:200px" width="20" height="20" viewBox="0 0 20 20"><path d="M10 2.500V17.500M2.500 10H17.500" stroke="#d0d0d0" stroke-width="1.200" stroke-dasharray="5 4 6 0"/><path d="M7.500 4 10 1.200 12.500 4M7.500 16 10 18.800 12.500 16M4 7.500 1.200 10 4 12.500M16 7.500 18.800 10 16 12.500" fill="none" stroke="#d0d0d0" stroke-width="1.200"/></svg>
<svg style="left:385px;top:226px" width="18" height="18" viewBox="0 0 18 18"><path d="M5.500 2.200A7.500 7.500 0 0 0 9 16.500" fill="none" stroke="#d0d0d0" stroke-width="1.300"/><path d="M12.500 15.800A7.500 7.500 0 0 0 9 1.500" fill="none" stroke="#d0d0d0" stroke-width="1.300"/><path d="M9.500 4.500V1H13" fill="none" stroke="#d0d0d0" stroke-width="1.300"/><path d="M8.500 13.500V17H5" fill="none" stroke="#d0d0d0" stroke-width="1.300"/></svg>
<svg style="left:385px;top:253px" width="18" height="18" viewBox="0 0 18 18"><rect x="0.600" y="0.600" width="16.800" height="16.800" rx="1.500" fill="none" stroke="#d0d0d0" stroke-width="1.100"/><rect x="0.600" y="11" width="6.400" height="6.400" fill="none" stroke="#d0d0d0" stroke-width="1.100"/><path d="M8 10 14 4M9.500 3.800H14.200V8.500" fill="none" stroke="#d0d0d0" stroke-width="1.100"/></svg>
<svg style="left:385px;top:279px" width="18" height="18" viewBox="0 0 18 18"><rect x="0" y="0" width="4" height="4" fill="#fff"/><rect x="14" y="0" width="4" height="4" fill="#fff"/><rect x="0" y="14" width="4" height="4" fill="#fff"/><rect x="14" y="14" width="4" height="4" fill="#fff"/><rect x="3.500" y="1.400" width="11" height="1.300" fill="#fff"/><rect x="3.500" y="15.400" width="11" height="1.300" fill="#fff"/><rect x="1.400" y="3.500" width="1.300" height="11" fill="#fff"/><rect x="15.400" y="3.500" width="1.300" height="11" fill="#fff"/></svg>
<svg style="left:384px;top:304px" width="20" height="20" viewBox="0 0 20 20"><circle cx="10" cy="10" r="7" fill="none" stroke="#d0d0d0" stroke-width="1.100" stroke-dasharray="3 1.500"/><path d="M10 5v10M5 10h10" stroke="#d0d0d0" stroke-width="1.100"/><path d="M8.500 6.500 10 4.500l1.500 2M8.500 13.500 10 15.500l1.500-2M6.500 8.500 4.500 10l2 1.500M13.500 8.500 15.500 10l-2 1.500" fill="none" stroke="#d0d0d0" stroke-width="1"/><path d="M16 1h3.500v3.500ZM4 19H0.500V15.500Z" fill="#d0d0d0"/></svg>
<svg style="left:384px;top:334px" width="20" height="18" viewBox="0 0 20 18"><path d="M3.200 14.500 9.200 4.500H10.800L17 11.500" fill="none" stroke="#a8a8a8" stroke-width="1.800"/><rect x="7.800" y="0.900" width="4.400" height="4.400" fill="#575757" stroke="#c8c8c8" stroke-width="1.400"/><rect x="0.900" y="12.400" width="4.400" height="4.400" fill="#575757" stroke="#c8c8c8" stroke-width="1.400"/><rect x="14.800" y="9.400" width="4.400" height="4.400" fill="#575757" stroke="#c8c8c8" stroke-width="1.400"/></svg>
<div class="a" style="left:1465px;top:92px;width:2px;height:961px;background:#1a1a1a;"></div>
<!-- project panel -->
<div class="a" style="left:0px;top:662px;width:1465px;height:24px;background:#282828;"></div>
<div class="tab" style="left:0px;top:662px;width:102px;height:24px;"></div>
<svg style="left:8px;top:668px" width="15" height="13" viewBox="0 0 15 13"><path d="M0.500 1.500a1 1 0 0 1 1-1h4.200l1.800 2h6a1 1 0 0 1 1 1v8a1 1 0 0 1-1 1h-12a1 1 0 0 1-1-1Z" fill="#c2c2c2"/></svg>
<span class="t" style="left:28.2px;top:667px;letter-spacing:0.46px;">Project</span>
<svg style="left:113.5px;top:668px" width="13" height="13" viewBox="0 0 13 13"><rect x="0.600" y="0.600" width="11.300" height="11.300" fill="none" stroke="#c8c8c8" stroke-width="1.200"/><path d="M2 3.500h8.500M2 6.250h8.500M2 9h8.500" stroke="#c8c8c8" stroke-width="1.600"/></svg>
<span class="t" style="left:132.0px;top:667px;letter-spacing:0.27px;">Console</span>
<svg style="left:1422px;top:667px" width="10" height="12" viewBox="0 0 10 12"><path d="M2.600 3.400a2.700 2.700 0 0 1 5.400-.3V6.500" fill="none" stroke="#c8c8c8" stroke-width="1.300"/><rect x="0.650" y="6.650" width="8.700" height="4.700" fill="none" stroke="#c8c8c8" stroke-width="1.300"/></svg>
<svg style="left:1446px;top:666.2px" width="4" height="13.6" viewBox="0 0 4 13.6"><circle cx="2" cy="2" r="1.55" fill="#c8c8c8"/><circle cx="2" cy="6.8" r="1.55" fill="#c8c8c8"/><circle cx="2" cy="11.6" r="1.55" fill="#c8c8c8"/></svg>
<div class="a" style="left:0px;top:686px;width:1465px;height:25px;background:#3c3c3c;"></div>
<div class="a" style="left:0px;top:710.5px;width:1465px;height:1px;background:#232323;"></div>
<svg style="left:8px;top:690px" width="16" height="16" viewBox="0 0 16 16"><path d="M8 0.500v15M0.500 8h15" stroke="#c4c4c4" stroke-width="1.500"/></svg>
<svg style="left:29.0px;top:695.5px" width="9" height="5" viewBox="0 0 9 5"><path d="M0 0H9L4.5 5Z" fill="#c4c4c4"/></svg>
<div class="fld" style="left:915px;top:689px;width:397px;height:20px;border-radius:6px;"></div>
<svg style="left:921px;top:694px" width="10" height="10" viewBox="0 0 10 10"><circle cx="3.600" cy="3.600" r="2.600" fill="none" stroke="#b4b4b4" stroke-width="1.400"/><path d="M5.500 5.500 9 9" stroke="#b4b4b4" stroke-width="1.700"/></svg>
<div class="a" style="left:1289px;top:690px;width:1px;height:18px;background:#1f1f1f;"></div>
<div class="a" style="left:1290px;top:690px;width:21px;height:18px;background:#3a3a3a;border-radius:0 6px 6px 0"></div>
<svg style="left:1293.5px;top:691.5px" width="15" height="15" viewBox="0 0 15 15"><rect x="2.800" y="0.700" width="11.500" height="11.500" fill="none" stroke="#c0c0c0" stroke-width="1.100"/><rect x="0.600" y="9" width="5.200" height="5.200" fill="#3a3a3a" stroke="#c0c0c0" stroke-width="1.100"/><path d="M6 9 11 3.800M7.800 3.500h3.500v3.500" fill="none" stroke="#c0c0c0" stroke-width="1.200"/></svg>
<div class="a" style="left:1315px;top:686px;width:1px;height:25px;background:#2a2a2a;"></div>
<div class="a" style="left:1347px;top:686px;width:1px;height:25px;background:#2a2a2a;"></div>
<div class="a" style="left:1380px;top:686px;width:1px;height:25px;background:#2a2a2a;"></div>
<div class="a" style="left:1412.5px;top:686px;width:1px;height:25px;background:#2a2a2a;"></div>
<svg style="left:1323px;top:691px" width="16" height="15" viewBox="0 0 16 15"><circle cx="4.500" cy="10.500" r="4" fill="#c4c4c4"/><rect x="2" y="0.500" width="6" height="5" fill="#c4c4c4"/><path d="M11.500 3 15.500 10h-8Z" fill="#c4c4c4"/></svg>
<svg style="left:1356px;top:692px" width="14" height="13" viewBox="0 0 14 13"><path d="M7.500 0.500h5.500v5.500L6 13 0.500 7.500Z" fill="#c4c4c4"/><circle cx="10.500" cy="3" r="1.100" fill="#3c3c3c"/></svg>
<svg style="left:1388px;top:691px" width="15" height="14" viewBox="0 0 15 14"><path d="M7.500 0.500 9.600 5.200l5 .5-3.800 3.400 1.100 5L7.500 11.500 3.100 14.100l1.100-5L0.400 5.700l5-.5Z" fill="#8c8c8c"/></svg>
<svg style="left:1420px;top:691px" width="20" height="14" viewBox="0 0 20 14"><path d="M1.500 7C4 3.500 6.500 2.500 9.500 2.500S15 3.500 17.500 7C15 10.500 12.500 11.500 9.500 11.500S4 10.500 1.500 7Z" fill="none" stroke="#c4c4c4" stroke-width="1.300"/><circle cx="9.500" cy="7" r="2.300" fill="none" stroke="#c4c4c4" stroke-width="1.300"/><path d="M3 13 16 1" stroke="#c4c4c4" stroke-width="1.400"/></svg>
<span class="t" style="left:1442.5px;top:692px;font-size:16px;letter-spacing:-2.29px;">10</span>
<div class="a" style="left:0px;top:711px;width:259px;height:342px;background:#383838;"></div>
<div class="a" style="left:259px;top:711px;width:1px;height:342px;background:#232323;"></div>
<div class="a" style="left:0px;top:811px;width:259px;height:20px;background:#4d4d4d;"></div>
<svg style="left:4.75px;top:717.75px" width="10.5" height="8.5" viewBox="0 0 10.5 8.5"><path d="M0 0H10.5L5.25 8.5Z" fill="#757575"/></svg>
<svg style="left:23px;top:714px" width="14" height="14" viewBox="0 0 14 14"><path d="M7 0.300 9 4.800l4.800.5-3.600 3.300 1 4.800L7 10.900 2.800 13.400l1-4.800L0.200 5.300 5 4.800Z" fill="#c4c4c4"/></svg>
<span class="t b" style="left:44.0px;top:714px;font-size:15.3px;letter-spacing:0.76px;">Favorites</span>
<svg style="left:39.7px;top:735.5px" width="14.5" height="14.5" viewBox="0 0 14 14"><circle cx="5.500" cy="5.500" r="4.600" fill="none" stroke="#c4c4c4" stroke-width="1.200"/><path d="M9 9 13.300 13.300" stroke="#c4c4c4" stroke-width="1.700"/></svg>
<span class="t" style="left:60.0px;top:734px;letter-spacing:0.34px;">All Materials</span>
<svg style="left:39.7px;top:755.5px" width="14.5" height="14.5" viewBox="0 0 14 14"><circle cx="5.500" cy="5.500" r="4.600" fill="none" stroke="#c4c4c4" stroke-width="1.200"/><path d="M9 9 13.300 13.300" stroke="#c4c4c4" stroke-width="1.700"/></svg>
<span class="t" style="left:60.0px;top:754px;letter-spacing:0.28px;">All Models</span>
<svg style="left:39.7px;top:775.5px" width="14.5" height="14.5" viewBox="0 0 14 14"><circle cx="5.500" cy="5.500" r="4.600" fill="none" stroke="#c4c4c4" stroke-width="1.200"/><path d="M9 9 13.300 13.300" stroke="#c4c4c4" stroke-width="1.700"/></svg>
<span class="t" style="left:60.0px;top:774px;letter-spacing:0.16px;">All Prefabs</span>
<svg style="left:4.75px;top:816.75px" width="10.5" height="8.5" viewBox="0 0 10.5 8.5"><path d="M0 0H10.5L5.25 8.5Z" fill="#757575"/></svg>
<svg style="left:23px;top:814px" width="17" height="13" viewBox="0 0 17 13"><path d="M0.500 11.500V1.500a1 1 0 0 1 1-1h4l1.800 2h5.200a1 1 0 0 1 1 1V5" fill="none" stroke="#c2c2c2" stroke-width="1.100"/><path d="M3.500 5.500h12.500l-2.500 6.500h-13Z" fill="#c2c2c2"/></svg>
<span class="t b" style="left:44.0px;top:813px;font-size:15.3px;letter-spacing:1.22px;">Assets</span>
<svg style="left:40px;top:835px" width="15" height="12" viewBox="0 0 15 12"><path d="M0.500 1.500a1 1 0 0 1 1-1h4l1.800 2h5.700a1 1 0 0 1 1 1v7.500a1 1 0 0 1-1 1h-11.500a1 1 0 0 1-1-1Z" fill="#c2c2c2"/></svg>
<span class="t" style="left:60.0px;top:833px;letter-spacing:0.46px;">characters</span>
<svg style="left:40px;top:855px" width="15" height="12" viewBox="0 0 15 12"><path d="M0.500 1.500a1 1 0 0 1 1-1h4l1.800 2h5.700a1 1 0 0 1 1 1v7.500a1 1 0 0 1-1 1h-11.500a1 1 0 0 1-1-1Z" fill="#c2c2c2"/></svg>
<span class="t" style="left:60.0px;top:853px;letter-spacing:0.36px;">Scenes</span>
<svg style="left:40px;top:875px" width="15" height="12" viewBox="0 0 15 12"><path d="M0.500 1.500a1 1 0 0 1 1-1h4l1.800 2h5.700a1 1 0 0 1 1 1v7.500a1 1 0 0 1-1 1h-11.500a1 1 0 0 1-1-1Z" fill="#c2c2c2"/></svg>
<span class="t" style="left:60.0px;top:873px;letter-spacing:0.48px;">TilePalette</span>
<svg style="left:6.25px;top:895.5px" width="8.5" height="11" viewBox="0 0 8.5 11"><path d="M0 0V11L8.5 5.5Z" fill="#7f7f7f"/></svg>
<svg style="left:23px;top:895px" width="15" height="12" viewBox="0 0 15 12"><path d="M0.500 1.500a1 1 0 0 1 1-1h4l1.800 2h5.700a1 1 0 0 1 1 1v7.500a1 1 0 0 1-1 1h-11.500a1 1 0 0 1-1-1Z" fill="#c2c2c2"/></svg>
<span class="t b" style="left:44.0px;top:893px;font-size:15.3px;letter-spacing:0.83px;">Packages</span>
<div class="a" style="left:260px;top:711px;width:1205px;height:342px;background:#333333;"></div>
<div class="a" style="left:260px;top:711px;width:1205px;height:26px;background:#3e3e3e;"></div>
<div class="a" style="left:260px;top:737px;width:1205px;height:1px;background:#262626;"></div>
<span class="t b" style="left:265.0px;top:717px;font-size:15.3px;letter-spacing:1.22px;color:#c0c0c0;">Assets</span>
<div class="a" style="left:260px;top:1028px;width:1205px;height:25px;background:#3f3f3f;"></div>
<div class="a" style="left:1376px;top:1039.5px;width:69px;height:2px;background:#5e5e5e;border-radius:1px"></div>
<div class="a" style="left:1409.5px;top:1034px;width:13px;height:13px;background:#999999;border-radius:50%"></div>
<svg style="left:289px;top:766px" width="60" height="50" viewBox="0 0 60 50"><path d="M0 4a4 4 0 0 1 4-4h13c2 0 3 .8 4 2.500l3.500 6c.6 1 1.500 1.500 3 1.500H56a4 4 0 0 1 4 4v32a4 4 0 0 1-4 4H4a4 4 0 0 1-4-4Z" fill="#c2c2c2"/></svg>
<svg style="left:384px;top:766px" width="60" height="50" viewBox="0 0 60 50"><path d="M0 4a4 4 0 0 1 4-4h13c2 0 3 .8 4 2.500l3.500 6c.6 1 1.500 1.500 3 1.500H56a4 4 0 0 1 4 4v32a4 4 0 0 1-4 4H4a4 4 0 0 1-4-4Z" fill="#c2c2c2"/></svg>
<svg style="left:479px;top:766px" width="60" height="50" viewBox="0 0 60 50"><path d="M0 4a4 4 0 0 1 4-4h13c2 0 3 .8 4 2.500l3.500 6c.6 1 1.500 1.500 3 1.500H56a4 4 0 0 1 4 4v32a4 4 0 0 1-4 4H4a4 4 0 0 1-4-4Z" fill="#c2c2c2"/></svg>
<svg style="left:669px;top:756px" width="60" height="70" viewBox="0 0 60 70"><path d="M0 4a4 4 0 0 1 4-4h41L60 15v51a4 4 0 0 1-4 4H4a4 4 0 0 1-4-4Z" fill="#efefef"/></svg>
<svg style="left:669px;top:756px" width="60" height="70" viewBox="0 0 60 70"><path d="M28.500 14.500 22 58.500M41.500 14.500 35 58.500" stroke="#2a6a2a" stroke-width="5.700"/><path d="M12 32.200H47.500M10.500 45.200H46" stroke="#2a6a2a" stroke-width="5.300"/></svg>
<svg style="left:764px;top:756px" width="60" height="70" viewBox="0 0 60 70"><path d="M0 4a4 4 0 0 1 4-4h41L60 15v51a4 4 0 0 1-4 4H4a4 4 0 0 1-4-4Z" fill="#efefef"/></svg>
<svg style="left:764px;top:756px" width="60" height="70" viewBox="0 0 60 70"><path d="M28.500 14.500 22 58.500M41.500 14.500 35 58.500" stroke="#2a6a2a" stroke-width="5.700"/><path d="M12 32.200H47.500M10.500 45.200H46" stroke="#2a6a2a" stroke-width="5.300"/></svg>
<svg style="left:859px;top:756px" width="60" height="70" viewBox="0 0 60 70"><path d="M0 4a4 4 0 0 1 4-4h41L60 15v51a4 4 0 0 1-4 4H4a4 4 0 0 1-4-4Z" fill="#efefef"/></svg>
<svg style="left:859px;top:756px" width="60" height="70" viewBox="0 0 60 70"><path d="M28.500 14.500 22 58.500M41.500 14.500 35 58.500" stroke="#2a6a2a" stroke-width="5.700"/><path d="M12 32.200H47.500M10.500 45.200H46" stroke="#2a6a2a" stroke-width="5.300"/></svg>
<svg style="left:564px;top:769px" width="80" height="45" viewBox="0 0 80 45"><defs><linearGradient id="sky2" x1="0" y1="0" x2="0" y2="1"><stop offset="0" stop-color="#0d5cc4"/><stop offset="0.080" stop-color="#1874dc"/><stop offset="0.300" stop-color="#2b90ea"/><stop offset="0.500" stop-color="#47b2f6"/><stop offset="0.600" stop-color="#5ccbfd"/><stop offset="1" stop-color="#5ccbfd"/></linearGradient></defs><rect width="80" height="45" fill="url(#sky2)"/><ellipse cx="13" cy="8" rx="9" ry="3" fill="#f8f8f8"/><ellipse cx="16" cy="11.5" rx="10" ry="2.5" fill="#f8f8f8"/><ellipse cx="57" cy="7" rx="11" ry="3.5" fill="#f8f8f8"/><ellipse cx="61" cy="11.5" rx="11" ry="3" fill="#f8f8f8"/><ellipse cx="36" cy="14.5" rx="6" ry="2.5" fill="#f8f8f8"/><ellipse cx="31" cy="18" rx="7" ry="2" fill="#f8f8f8"/><ellipse cx="73" cy="15.5" rx="5" ry="2" fill="#f8f8f8"/><ellipse cx="70" cy="18.5" rx="5.5" ry="1.8" fill="#f8f8f8"/><circle cx="30.500" cy="6.500" r="3.600" fill="#fdd349"/></svg>
<svg style="left:634px;top:780px" width="20" height="20" viewBox="0 0 20 20"><circle cx="10" cy="10" r="10" fill="#cdcdcd"/><path d="M7.300 5.300 15 10 7.300 14.700Z" fill="#3a3a3a"/></svg>
<div class="a" style="left:945px;top:753px;width:76px;height:77px;background:#333333;border:1px solid #2b2b2b;box-shadow:0 1px 2px rgba(0,0,0,.35)"></div>
<svg style="left:946px;top:754px" width="32" height="26" viewBox="0 0 32 26"><rect x="0" y="0" width="8" height="3" fill="#3fd63f"/><rect x="0" y="3" width="8" height="12" fill="#ba8551"/><path d="M22 1 29.500 8.500v7L22 22.500 14.500 15.500v-7Z" fill="#ba8551"/><path d="M22 0.500 30 8.500 28.500 10 22 3.500 15.500 10 14 8.500Z" fill="#3fd63f"/></svg>
<svg style="left:1014px;top:780px" width="20" height="20" viewBox="0 0 20 20"><circle cx="10" cy="10" r="10" fill="#cdcdcd"/><path d="M7.300 5.300 15 10 7.300 14.700Z" fill="#3a3a3a"/></svg>
<span class="t" style="left:283.5px;top:835px;font-size:13px;letter-spacing:0.92px;color:#c4c4c4;">characters</span>
<span class="t" style="left:390.8px;top:835px;font-size:13px;letter-spacing:0.63px;color:#c4c4c4;">Scenes</span>
<span class="t" style="left:474.2px;top:835px;font-size:13px;letter-spacing:0.46px;color:#c4c4c4;">TilePalette</span>
<span class="t" style="left:564.0px;top:835px;font-size:13px;letter-spacing:0.41px;color:#c4c4c4;">backgraou...</span>
<span class="t" style="left:660.8px;top:835px;font-size:13px;letter-spacing:0.27px;color:#c4c4c4;">GroundCh...</span>
<span class="t" style="left:755.8px;top:835px;font-size:13px;letter-spacing:0.38px;color:#c4c4c4;">MoveCam...</span>
<span class="t" style="left:849.8px;top:835px;font-size:13px;letter-spacing:0.64px;color:#c4c4c4;">MoveSheep</span>
<span class="t" style="left:970.0px;top:835px;font-size:13px;letter-spacing:0.72px;color:#c4c4c4;">tiles</span>
<!-- inspector panel -->
<div class="a" style="left:1467px;top:92px;width:453px;height:961px;background:#383838;"></div>
<div class="a" style="left:1467px;top:92px;width:453px;height:24px;background:#282828;"></div>
<div class="tab" style="left:1467px;top:92px;width:119px;height:24px;border-top:2px solid #3a72b0;"></div>
<svg style="left:1478.8px;top:98.9px" width="12.4" height="12.4" viewBox="0 0 13 13"><circle cx="6.500" cy="6.500" r="6.500" fill="#c4c4c4"/><rect x="5.500" y="5.500" width="2" height="5" fill="#3c3c3c"/><rect x="5.500" y="2.500" width="2" height="2" fill="#3c3c3c"/></svg>
<span class="t" style="left:1497.3px;top:97px;letter-spacing:0.37px;">Inspector</span>
<svg style="left:1876px;top:97px" width="10" height="12" viewBox="0 0 10 12"><path d="M2.600 3.400a2.700 2.700 0 0 1 5.400-.3V6.500" fill="none" stroke="#c8c8c8" stroke-width="1.300"/><rect x="0.650" y="6.650" width="8.700" height="4.700" fill="none" stroke="#c8c8c8" stroke-width="1.300"/></svg>
<svg style="left:1900px;top:96.2px" width="4" height="13.6" viewBox="0 0 4 13.6"><circle cx="2" cy="2" r="1.55" fill="#c8c8c8"/><circle cx="2" cy="6.8" r="1.55" fill="#c8c8c8"/><circle cx="2" cy="11.6" r="1.55" fill="#c8c8c8"/></svg>
<div class="a" style="left:1904px;top:116px;width:16px;height:937px;background:#3a3a3a;"></div>
<div class="a" style="left:1904px;top:116px;width:1px;height:937px;background:#323232;"></div>
<div class="a" style="left:1907px;top:458px;width:11.5px;height:574px;background:#5f5f5f;border-radius:6px"></div>
<svg style="left:1907px;top:123px" width="10" height="6" viewBox="0 0 10 6"><path d="M0 6H10L5 0Z" fill="#c4c4c4"/></svg>
<svg style="left:1907px;top:1039px" width="10" height="6" viewBox="0 0 10 6"><path d="M0 0H10L5 6Z" fill="#c4c4c4"/></svg>
<div class="a" style="left:1646px;top:112px;width:253px;height:8px;background:#2a2a2a;border:1px solid #1f1f1f;border-top:0;border-radius:0 0 3px 3px"></div>
<div class="a" style="left:1875px;top:112px;width:23px;height:7px;background:#373737;"></div>
<div class="a" style="left:1693px;top:117px;width:2px;height:1.5px;background:#a0a0a0;"></div><div class="a" style="left:1718px;top:116.5px;width:3px;height:2px;background:#a0a0a0;"></div><div class="a" style="left:1841px;top:117px;width:2px;height:1.5px;background:#a0a0a0;"></div>
<span class="t" style="left:1491.2px;top:126px;letter-spacing:0.16px;">Is Trigger</span>
<div class="cb" style="left:1646px;top:125px;width:17px;height:18px;"></div>
<span class="t" style="left:1491.2px;top:151px;letter-spacing:0.23px;">Used By Effector</span>
<div class="cb" style="left:1646px;top:150px;width:17px;height:18px;"></div>
<span class="t" style="left:1491.2px;top:176px;letter-spacing:0.29px;">Offset</span>
<span class="t" style="left:1648.3px;top:176px;letter-spacing:-0.34px;">X</span>
<div class="fld" style="left:1665px;top:172px;width:62px;height:23px;"></div><span class="t" style="left:1669.4px;top:177px;color:#d2d2d2;">0</span>
<span class="t" style="left:1733.5px;top:176px;letter-spacing:-0.34px;">Y</span>
<div class="fld" style="left:1751px;top:172px;width:62px;height:23px;"></div><span class="t" style="left:1755.4px;top:177px;color:#d2d2d2;">0</span>
<span class="t" style="left:1491.2px;top:201px;letter-spacing:-0.05px;">Radius</span>
<div class="fld" style="left:1646px;top:197px;width:253px;height:23px;"></div><span class="t" style="left:1650.4px;top:202px;letter-spacing:0.23px;color:#d2d2d2;">0.5</span>
<svg style="left:1476.05px;top:228.0px" width="8.5" height="11" viewBox="0 0 8.5 11"><path d="M0 0V11L8.5 5.5Z" fill="#7f7f7f"/></svg>
<span class="t" style="left:1491.2px;top:226px;letter-spacing:0.22px;">Info</span>
<div class="a" style="left:1467px;top:254px;width:437px;height:28px;background:#3e3e3e;border-top:1px solid #1a1a1a;border-bottom:1px solid #363636"></div><svg style="left:1474.75px;top:263.95px" width="10.5" height="8.5" viewBox="0 0 10.5 8.5"><path d="M0 0H10.5L5.25 8.5Z" fill="#757575"/></svg><svg style="left:1493px;top:259px" width="18" height="18" viewBox="0 0 18 18"><circle cx="9" cy="9" r="8.200" fill="#a4ee5c" stroke="#a4ee5c" stroke-width="1.300"/><path d="M9 9V2A7 7 0 0 1 16 9ZM9 9v7A7 7 0 0 1 2 9Z" fill="#1e1e1e"/></svg><span class="t b" style="left:1542.2px;top:261px;font-size:15.3px;letter-spacing:0.65px;color:#d8d8d8;">Rigidbody 2D</span><svg style="left:1831.5px;top:261.5px" width="13" height="13" viewBox="0 0 13 13"><circle cx="6.500" cy="6.500" r="6.500" fill="#c4c4c4"/><path d="M4.600 5.200a2 2 0 1 1 2.900 1.700c-.7.400-1 .8-1 1.600" fill="none" stroke="#3e3e3e" stroke-width="1.500"/><rect x="5.700" y="9.600" width="1.600" height="1.600" fill="#3e3e3e"/></svg><svg style="left:1856.5px;top:261.5px" width="13" height="13" viewBox="0 0 13 13"><path d="M0 3.500h6M9 3.500h4M0 9.500h3M6.500 9.500H13" stroke="#c4c4c4" stroke-width="1.300"/><path d="M7.500 0.500v6M4.500 6.500v6" stroke="#c4c4c4" stroke-width="1.500"/></svg><svg style="left:1886px;top:260.7px" width="4" height="13.6" viewBox="0 0 4 13.6"><circle cx="2" cy="2" r="1.55" fill="#c8c8c8"/><circle cx="2" cy="6.8" r="1.55" fill="#c8c8c8"/><circle cx="2" cy="11.6" r="1.55" fill="#c8c8c8"/></svg>
<span class="t" style="left:1491.2px;top:291px;letter-spacing:0.51px;">Body Type</span>
<span class="t" style="left:1491.2px;top:316px;letter-spacing:0.41px;">Material</span>
<span class="t" style="left:1491.2px;top:341px;letter-spacing:0.32px;">Simulated</span>
<span class="t" style="left:1491.2px;top:366px;letter-spacing:0.23px;">Use Auto Mass</span>
<span class="t" style="left:1491.2px;top:391px;letter-spacing:0.32px;">Mass</span>
<span class="t" style="left:1491.2px;top:416px;letter-spacing:0.15px;">Linear Drag</span>
<span class="t" style="left:1491.2px;top:441px;letter-spacing:0.11px;">Angular Drag</span>
<span class="t" style="left:1491.2px;top:466px;letter-spacing:0.32px;">Gravity Scale</span>
<span class="t" style="left:1491.2px;top:491px;letter-spacing:0.40px;">Collision Detection</span>
<span class="t" style="left:1491.2px;top:516px;letter-spacing:0.34px;">Sleeping Mode</span>
<span class="t" style="left:1491.2px;top:541px;letter-spacing:0.32px;">Interpolate</span>
<span class="t" style="left:1491.2px;top:566px;letter-spacing:0.26px;">Constraints</span>
<span class="t" style="left:1491.2px;top:591px;letter-spacing:0.22px;">Info</span>
<div class="dd" style="left:1646px;top:288px;width:253px;height:22px;"></div><span class="t" style="left:1651.2px;top:290px;letter-spacing:0.37px;color:#e0e0e0;">Dynamic</span><svg style="left:1881.5px;top:296.0px" width="10" height="6" viewBox="0 0 10 6"><path d="M0 0H10L5.0 6Z" fill="#d0d0d0"/></svg>
<div class="fld" style="left:1646px;top:312px;width:253px;height:23px;"></div><span class="t" style="left:1650.0px;top:317px;letter-spacing:0.23px;color:#d2d2d2;">None (Physics Material 2D)</span><div class="a" style="left:1875px;top:313px;width:23px;height:21px;background:#373737;border-radius:0 2px 2px 0"></div><svg style="left:1880px;top:317px" width="13" height="13" viewBox="0 0 13 13"><circle cx="6.500" cy="6.500" r="5.500" fill="none" stroke="#c8c8c8" stroke-width="1.100"/><circle cx="6.500" cy="6.500" r="1.700" fill="#c8c8c8"/></svg>
<div class="cb" style="left:1646px;top:340px;width:17px;height:18px;"></div><svg style="left:1646px;top:340px" width="17" height="18" viewBox="0 0 17 18"><path d="M3.400 9.600 6.600 13 13.400 5.200" fill="none" stroke="#f0f0f0" stroke-width="1.800"/></svg>
<div class="cb" style="left:1646px;top:365px;width:17px;height:18px;"></div>
<div class="fld" style="left:1646px;top:387px;width:253px;height:23px;"></div><span class="t" style="left:1650.4px;top:392px;color:#d2d2d2;">1</span>
<div class="fld" style="left:1646px;top:412px;width:253px;height:23px;"></div><span class="t" style="left:1650.4px;top:417px;color:#d2d2d2;">0</span>
<div class="fld" style="left:1646px;top:437px;width:253px;height:23px;"></div><span class="t" style="left:1650.4px;top:442px;letter-spacing:0.61px;color:#d2d2d2;">0.05</span>
<div class="fld" style="left:1646px;top:462px;width:253px;height:23px;"></div><span class="t" style="left:1650.4px;top:467px;color:#d2d2d2;">1</span>
<div class="dd" style="left:1646px;top:488px;width:253px;height:22px;"></div><span class="t" style="left:1651.2px;top:490px;letter-spacing:0.38px;color:#e0e0e0;">Discrete</span><svg style="left:1881.5px;top:496.0px" width="10" height="6" viewBox="0 0 10 6"><path d="M0 0H10L5.0 6Z" fill="#d0d0d0"/></svg>
<div class="dd" style="left:1646px;top:513px;width:253px;height:22px;"></div><span class="t" style="left:1651.2px;top:515px;letter-spacing:0.51px;color:#e0e0e0;">Start Awake</span><svg style="left:1881.5px;top:521.0px" width="10" height="6" viewBox="0 0 10 6"><path d="M0 0H10L5.0 6Z" fill="#d0d0d0"/></svg>
<div class="dd" style="left:1646px;top:538px;width:253px;height:22px;"></div><span class="t" style="left:1651.2px;top:540px;letter-spacing:0.15px;color:#e0e0e0;">None</span><svg style="left:1881.5px;top:546.0px" width="10" height="6" viewBox="0 0 10 6"><path d="M0 0H10L5.0 6Z" fill="#d0d0d0"/></svg>
<svg style="left:1476.05px;top:568.0px" width="8.5" height="11" viewBox="0 0 8.5 11"><path d="M0 0V11L8.5 5.5Z" fill="#7f7f7f"/></svg>
<svg style="left:1476.05px;top:593.0px" width="8.5" height="11" viewBox="0 0 8.5 11"><path d="M0 0V11L8.5 5.5Z" fill="#7f7f7f"/></svg>
<div class="a" style="left:1467px;top:619px;width:437px;height:29px;background:#3e3e3e;border-top:1px solid #1a1a1a;border-bottom:1px solid #363636"></div><svg style="left:1476.05px;top:627.5px" width="8.5" height="11" viewBox="0 0 8.5 11"><path d="M0 0V11L8.5 5.5Z" fill="#7f7f7f"/></svg><svg style="left:1494.5px;top:624px" width="15" height="18" viewBox="0 0 15 18"><path d="M0 1.500a1.500 1.500 0 0 1 1.500-1.500H10.500L15 4.500V16.500a1.500 1.500 0 0 1-1.500 1.500h-12a1.500 1.500 0 0 1-1.500-1.500Z" fill="#f0f0f0"/><path d="M5.600 5 4.400 14.500M10 5 8.800 14.500M2.500 8.200h10M2 11.600h10" stroke="#2d7a2d" stroke-width="1.700"/></svg><div class="cb" style="left:1517px;top:624px;width:17px;height:18px;"></div><svg style="left:1517px;top:624px" width="17" height="18" viewBox="0 0 17 18"><path d="M3.400 9.600 6.600 13 13.400 5.200" fill="none" stroke="#f0f0f0" stroke-width="1.800"/></svg><span class="t b" style="left:1542.2px;top:626px;font-size:15.3px;letter-spacing:0.70px;color:#7badf7;">Move Sheep (Script)</span><svg style="left:1831.5px;top:626.5px" width="13" height="13" viewBox="0 0 13 13"><circle cx="6.500" cy="6.500" r="6.500" fill="#c4c4c4"/><path d="M4.600 5.200a2 2 0 1 1 2.900 1.700c-.7.400-1 .8-1 1.600" fill="none" stroke="#3e3e3e" stroke-width="1.500"/><rect x="5.700" y="9.600" width="1.600" height="1.600" fill="#3e3e3e"/></svg><svg style="left:1856.5px;top:626.5px" width="13" height="13" viewBox="0 0 13 13"><path d="M0 3.500h6M9 3.500h4M0 9.500h3M6.500 9.500H13" stroke="#c4c4c4" stroke-width="1.300"/><path d="M7.500 0.500v6M4.500 6.500v6" stroke="#c4c4c4" stroke-width="1.500"/></svg><svg style="left:1886px;top:625.7px" width="4" height="13.6" viewBox="0 0 4 13.6"><circle cx="2" cy="2" r="1.55" fill="#c8c8c8"/><circle cx="2" cy="6.8" r="1.55" fill="#c8c8c8"/><circle cx="2" cy="11.6" r="1.55" fill="#c8c8c8"/></svg>
<div class="a" style="left:1467px;top:647px;width:437px;height:28px;background:#3e3e3e;border-top:1px solid #1a1a1a;border-bottom:1px solid #363636"></div><svg style="left:1474.75px;top:656.95px" width="10.5" height="8.5" viewBox="0 0 10.5 8.5"><path d="M0 0H10.5L5.25 8.5Z" fill="#757575"/></svg><svg style="left:1494px;top:652px" width="18" height="18" viewBox="0 0 18 18"><path d="M1.500 2.200C3 6.500 6 8.800 15 8.900" fill="none" stroke="#d4d4d4" stroke-width="1.900"/><path d="M11.700 5.200 16.300 8.900 11.700 12.600Z" fill="#d4d4d4"/><path d="M5.600 10.300C3.800 11.800 2.500 13.500 1.800 15.800" fill="none" stroke="#6ff0de" stroke-width="1.900"/></svg><div class="cb" style="left:1517px;top:652px;width:17px;height:18px;"></div><svg style="left:1517px;top:652px" width="17" height="18" viewBox="0 0 17 18"><path d="M3.400 9.600 6.600 13 13.400 5.200" fill="none" stroke="#f0f0f0" stroke-width="1.800"/></svg><span class="t b" style="left:1542.2px;top:654px;font-size:15.3px;letter-spacing:0.90px;color:#d8d8d8;">Animator</span><svg style="left:1831.5px;top:654.5px" width="13" height="13" viewBox="0 0 13 13"><circle cx="6.500" cy="6.500" r="6.500" fill="#c4c4c4"/><path d="M4.600 5.200a2 2 0 1 1 2.900 1.700c-.7.400-1 .8-1 1.600" fill="none" stroke="#3e3e3e" stroke-width="1.500"/><rect x="5.700" y="9.600" width="1.600" height="1.600" fill="#3e3e3e"/></svg><svg style="left:1856.5px;top:654.5px" width="13" height="13" viewBox="0 0 13 13"><path d="M0 3.500h6M9 3.500h4M0 9.500h3M6.500 9.500H13" stroke="#c4c4c4" stroke-width="1.300"/><path d="M7.500 0.500v6M4.500 6.500v6" stroke="#c4c4c4" stroke-width="1.500"/></svg><svg style="left:1886px;top:653.7px" width="4" height="13.6" viewBox="0 0 4 13.6"><circle cx="2" cy="2" r="1.55" fill="#c8c8c8"/><circle cx="2" cy="6.8" r="1.55" fill="#c8c8c8"/><circle cx="2" cy="11.6" r="1.55" fill="#c8c8c8"/></svg>
<span class="t" style="left:1491.2px;top:684px;letter-spacing:0.31px;">Controller</span>
<span class="t" style="left:1491.2px;top:709px;letter-spacing:0.50px;">Avatar</span>
<span class="t" style="left:1491.2px;top:734px;letter-spacing:0.27px;">Apply Root Motion</span>
<span class="t" style="left:1491.2px;top:759px;letter-spacing:0.29px;">Update Mode</span>
<span class="t" style="left:1491.2px;top:784px;letter-spacing:0.32px;">Culling Mode</span>
<div class="fld" style="left:1646px;top:680px;width:253px;height:23px;"></div><span class="t" style="left:1650.0px;top:685px;letter-spacing:0.19px;color:#d2d2d2;overflow:hidden;width:223.5px;">None (Runtime Animator Controller)</span><div class="a" style="left:1875px;top:681px;width:23px;height:21px;background:#373737;border-radius:0 2px 2px 0"></div><svg style="left:1880px;top:685px" width="13" height="13" viewBox="0 0 13 13"><circle cx="6.500" cy="6.500" r="5.500" fill="none" stroke="#c8c8c8" stroke-width="1.100"/><circle cx="6.500" cy="6.500" r="1.700" fill="#c8c8c8"/></svg>
<div class="fld" style="left:1646px;top:705px;width:253px;height:23px;"></div><span class="t" style="left:1650.0px;top:710px;letter-spacing:0.19px;color:#d2d2d2;">None (Avatar)</span><div class="a" style="left:1875px;top:706px;width:23px;height:21px;background:#373737;border-radius:0 2px 2px 0"></div><svg style="left:1880px;top:710px" width="13" height="13" viewBox="0 0 13 13"><circle cx="6.500" cy="6.500" r="5.500" fill="none" stroke="#c8c8c8" stroke-width="1.100"/><circle cx="6.500" cy="6.500" r="1.700" fill="#c8c8c8"/></svg>
<div class="cb" style="left:1646px;top:733px;width:17px;height:18px;"></div>
<div class="dd" style="left:1646px;top:756px;width:253px;height:22px;"></div><span class="t" style="left:1651.2px;top:758px;letter-spacing:0.11px;color:#e0e0e0;">Normal</span><svg style="left:1881.5px;top:764.0px" width="10" height="6" viewBox="0 0 10 6"><path d="M0 0H10L5.0 6Z" fill="#d0d0d0"/></svg>
<div class="dd" style="left:1646px;top:781px;width:253px;height:22px;"></div><span class="t" style="left:1651.2px;top:783px;letter-spacing:0.47px;color:#e0e0e0;">Always Animate</span><svg style="left:1881.5px;top:789.0px" width="10" height="6" viewBox="0 0 10 6"><path d="M0 0H10L5.0 6Z" fill="#d0d0d0"/></svg>
<div class="a" style="left:1489px;top:805px;width:410px;height:97px;background:#404040;border:1px solid #232323;border-radius:3px"></div>
<svg style="left:1496px;top:836px" width="34" height="36" viewBox="0 0 34 36"><path d="M16.500 1a15.500 15.500 0 1 1-6 29.800L26 35l-1.500-6.500A15.500 15.500 0 0 0 16.500 1Z" fill="#f0f0f0"/><circle cx="16.500" cy="16.500" r="15.500" fill="#f0f0f0"/><path d="M24 28 27.500 34.500 19 31Z" fill="#f0f0f0"/><path d="M14.800 6h3.600l-.7 13h-2.200Z" fill="#383838"/><circle cx="16.600" cy="23.500" r="2.200" fill="#383838"/></svg>
<span class="t" style="left:1535.3px;top:810px;font-size:13px;letter-spacing:0.40px;color:#c0c0c0;">Clip Count: 0</span>
<span class="t" style="left:1535.3px;top:825px;font-size:13px;letter-spacing:0.42px;color:#c0c0c0;">Curves Pos: 0 Quat: 0 Euler: 0 Scale: 0 Muscles: 0</span>
<span class="t" style="left:1535.3px;top:840px;font-size:13px;letter-spacing:0.42px;color:#c0c0c0;">Generic: 0 PPtr: 0</span>
<span class="t" style="left:1535.3px;top:855px;font-size:13px;letter-spacing:0.45px;color:#c0c0c0;">Curves Count: 0 Constant: 0 (0.0%) Dense: 0 (0.0%)</span>
<span class="t" style="left:1535.3px;top:870px;font-size:13px;letter-spacing:0.38px;color:#c0c0c0;">Stream: 0 (0.0%)</span>
<div class="a" style="left:1492px;top:928px;width:30px;height:30px;background:#ffffff;box-shadow:0 0 0 1px #303030"></div>
<span class="t" style="left:1536.0px;top:923px;font-size:17.5px;letter-spacing:0.14px;color:#a8a8a8;">Sprites-Default (Material)</span>
<svg style="left:1867.5px;top:924.5px" width="13" height="13" viewBox="0 0 13 13"><circle cx="6.500" cy="6.500" r="6.500" fill="#c4c4c4"/><path d="M4.600 5.200a2 2 0 1 1 2.900 1.700c-.7.400-1 .8-1 1.600" fill="none" stroke="#3e3e3e" stroke-width="1.500"/><rect x="5.700" y="9.600" width="1.600" height="1.600" fill="#3e3e3e"/></svg>
<svg style="left:1892px;top:923.7px" width="4" height="13.6" viewBox="0 0 4 13.6"><circle cx="2" cy="2" r="1.55" fill="#c8c8c8"/><circle cx="2" cy="6.8" r="1.55" fill="#c8c8c8"/><circle cx="2" cy="11.6" r="1.55" fill="#c8c8c8"/></svg>
<svg style="left:1476.25px;top:963.5px" width="8.5" height="11" viewBox="0 0 8.5 11"><path d="M0 0V11L8.5 5.5Z" fill="#7f7f7f"/></svg>
<span class="t" style="left:1533.3px;top:954px;letter-spacing:0.10px;color:#8c8c8c;">Shader</span>
<div class="dd" style="left:1597.7px;top:950.8px;width:239px;height:21.5px;background:#474747;border-color:#424242"></div>
<span class="t" style="left:1602.3px;top:953px;letter-spacing:0.35px;color:#9a9a9a;">Sprites/Default</span>
<svg style="left:1820.5px;top:958.8px" width="10" height="6" viewBox="0 0 10 6"><path d="M0 0H10L5.0 6Z" fill="#8c8c8c"/></svg>
<div class="dd" style="left:1843.3px;top:950.8px;width:54.5px;height:21.5px;background:#4a4a4a;border-color:#444"></div>
<span class="t" style="left:1850.0px;top:953px;letter-spacing:-0.19px;color:#9a9a9a;">Edit...</span>
<div class="a" style="left:1467px;top:983px;width:437px;height:1px;background:#1a1a1a;"></div>
<div class="a" style="left:1467px;top:997px;width:437px;height:1px;background:#1a1a1a;"></div>
<div class="a" style="left:1543px;top:1009.3px;width:285.3px;height:27.4px;background:#585858;border:1px solid #303030;border-radius:3px"></div>
<span class="t" style="left:1627.5px;top:1016px;letter-spacing:0.25px;color:#e4e4e4;">Add Component</span>
<svg style="left:1461px;top:639px" width="448" height="282" viewBox="0 0 448 282" shape-rendering="crispEdges"><defs><pattern id="chk" width="2" height="2" patternUnits="userSpaceOnUse"><rect x="0" y="0" width="1" height="1" fill="#f51a1a"/><rect x="1" y="1" width="1" height="1" fill="#f51a1a"/></pattern></defs><path fill-rule="evenodd" fill="url(#chk)" d="M4 0H444a4 4 0 0 1 4 4V278a4 4 0 0 1-4 4H4a4 4 0 0 1-4-4V4a4 4 0 0 1 4-4ZM12 12V270H436V12Z"/></svg>
<!-- status bar -->
<div class="a" style="left:0px;top:1053px;width:1920px;height:27px;background:#191919;"></div>
<div class="a" style="left:1787.5px;top:1054px;width:1px;height:26px;background:#262626;"></div>
<div class="a" style="left:1820.5px;top:1054px;width:1px;height:26px;background:#262626;"></div>
<div class="a" style="left:1854px;top:1054px;width:1px;height:26px;background:#262626;"></div>
<div class="a" style="left:1886.5px;top:1054px;width:1px;height:26px;background:#262626;"></div>
<svg style="left:1795px;top:1058px" width="19" height="19" viewBox="0 0 19 19"><ellipse cx="9.200" cy="11.200" rx="5.300" ry="6.300" fill="#c8c8c8"/><circle cx="9.200" cy="5" r="3" fill="#c8c8c8"/><path d="M7 3.500 5 1M11.500 3.500 13.500 1M4.500 8.500 1.500 7M14 8.500 17 7M4 11.500H1M14.500 11.500H17.500M4.500 14.500 2 17M14 14.500 16.500 17" stroke="#c8c8c8" stroke-width="1.500" fill="none"/><path d="M1.500 1 17.500 18" stroke="#191919" stroke-width="3.600"/><path d="M1.500 1 17.500 18" stroke="#c8c8c8" stroke-width="1.500"/></svg>
<svg style="left:1828px;top:1058px" width="19" height="19" viewBox="0 0 19 19"><path d="M2 4.500C2 2.800 5 1.500 9 1.500S16 2.800 16 4.500V14.500C16 16.200 13 17.500 9 17.500S2 16.200 2 14.500Z" fill="#c8c8c8"/><path d="M2 7.500C2 9.200 5 10.500 9 10.500S16 9.200 16 7.500M2 11.500C2 13.200 5 14.500 9 14.500S16 13.200 16 11.500" fill="none" stroke="#191919" stroke-width="1.300"/><path d="M1.500 1 17.500 18" stroke="#191919" stroke-width="3.600"/><path d="M1.500 1 17.500 18" stroke="#c8c8c8" stroke-width="1.500"/></svg>
<svg style="left:1861px;top:1058px" width="19" height="19" viewBox="0 0 19 19"><path d="M3.200 5.500A7.500 7.500 0 0 1 15 4.200M16.200 13A7.500 7.500 0 0 1 4 14.800" fill="none" stroke="#c8c8c8" stroke-width="1.600"/><path d="M13 1.500 17 2.200 15.800 6.200ZM6 17.500 2 16.800 3.200 12.800Z" fill="#c8c8c8"/><circle cx="9.500" cy="8" r="3" fill="#c8c8c8"/><path d="M6.500 14C6.500 11.500 12.500 11.500 12.500 14Z" fill="#c8c8c8"/><path d="M1.500 1 17.500 18" stroke="#191919" stroke-width="3.600"/><path d="M1.500 1 17.500 18" stroke="#c8c8c8" stroke-width="1.500"/></svg>
<svg style="left:1892.5px;top:1058.7px" width="19" height="19" viewBox="0 0 19 19"><circle cx="9.500" cy="9.500" r="8.400" fill="none" stroke="#c8c8c8" stroke-width="1.400"/><path d="M5.800 9.800 8.600 12.500 13.600 7" fill="none" stroke="#c8c8c8" stroke-width="1.700"/></svg>
</div>
</body>
</html>
